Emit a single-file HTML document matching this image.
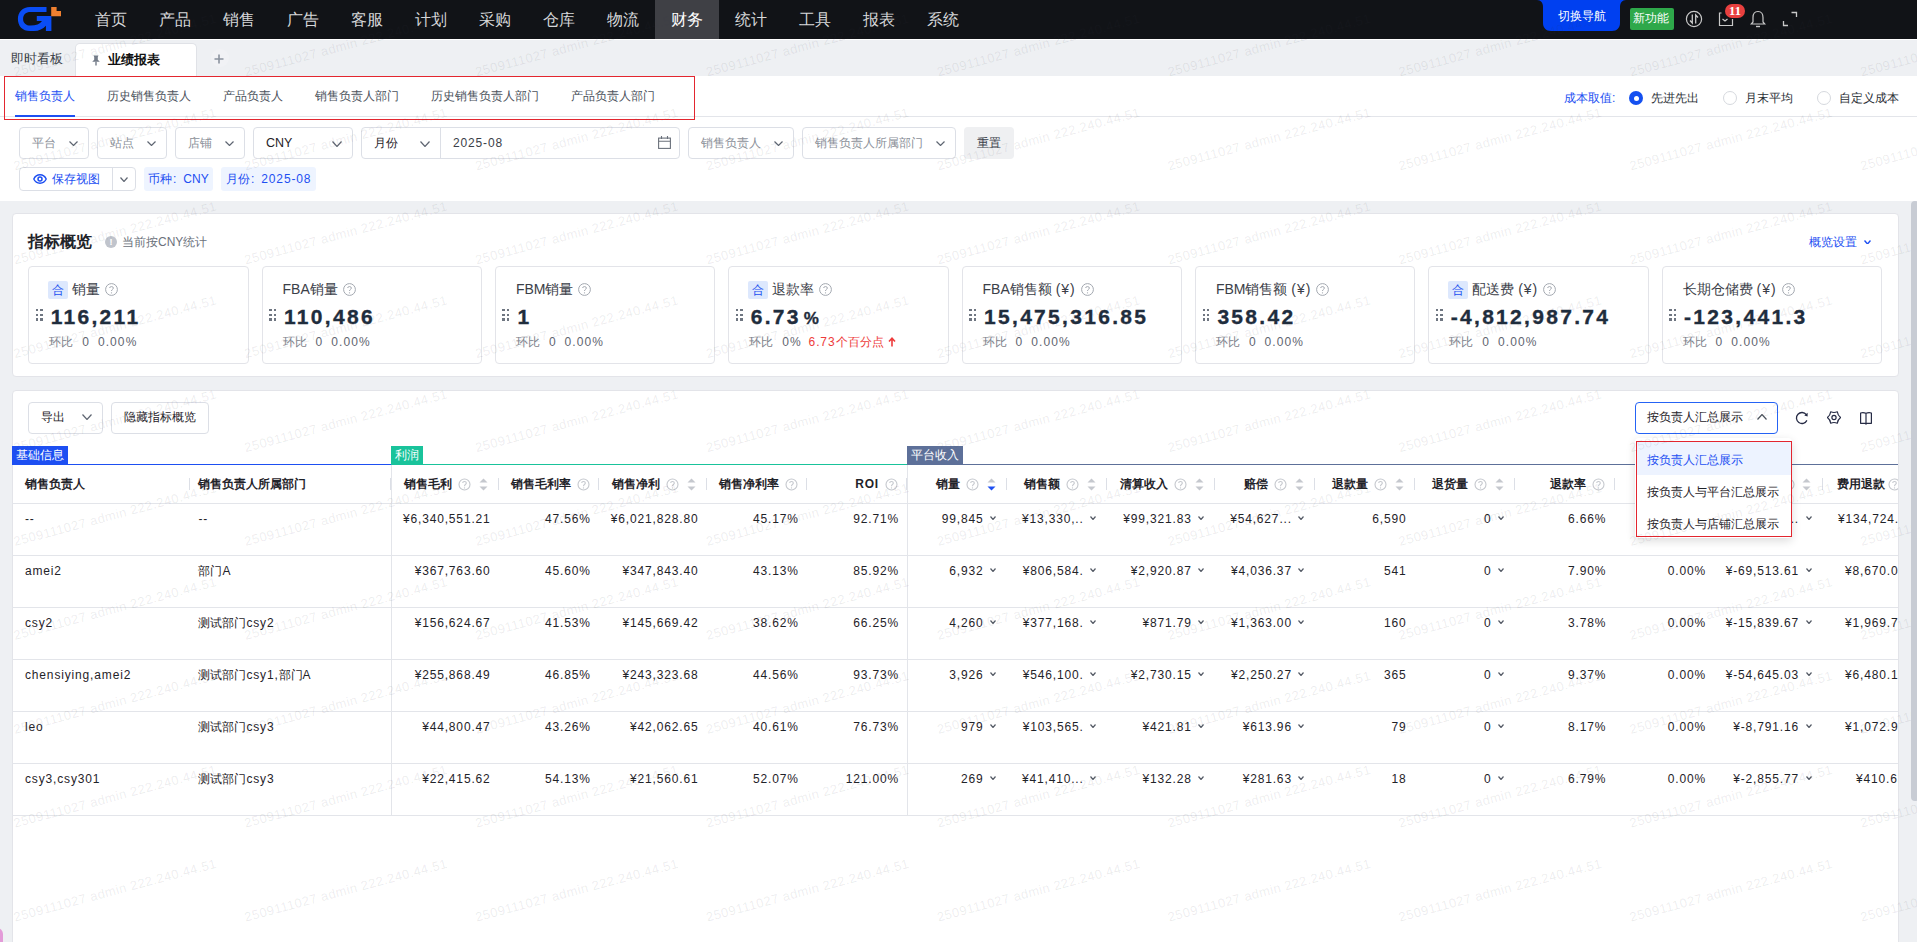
<!DOCTYPE html><html><head><meta charset="utf-8"><style>
*{box-sizing:border-box;margin:0;padding:0}
html,body{width:1917px;height:942px;overflow:hidden}
body{position:relative;background:#eef0f3;font-family:"Liberation Sans",sans-serif;color:#1f2329;font-size:12px;line-height:1}
.a{position:absolute;white-space:nowrap}
.nav{left:0;top:0;width:1917px;height:39px;background:#111317}
.nv{top:12px;height:16px;font-size:16px;color:#d6d7d9;width:64px;text-align:center}
.v{letter-spacing:.07em}
.box{border:1px solid #dcdfe6;border-radius:4px;background:#fff}
.chev{position:absolute}
.q{position:absolute;width:12px;height:12px;border:1px solid #c5c8ce;border-radius:50%;font-size:9px;line-height:10px;text-align:center;color:#c5c8ce}
.card{position:absolute;background:#fff;border:1px solid #e3e4e9;border-radius:4px}
.mc{position:absolute;top:266px;width:220.4px;height:97.5px;border:1px solid #e3e4e9;border-radius:4px;background:#fff}
.hd{font-weight:bold;font-size:12px;color:#1f2329}
.td{font-size:12px;color:#1f2329}
.sep{position:absolute;top:478px;width:1px;height:12px;background:#dcdfe6}
</style></head><body>
<div class="a nav"></div>
<svg class="a" style="left:0;top:0" width="70" height="39" viewBox="0 0 70 39">
<path d="M46.5 6.9 L30 6.9 C22.5 6.9 17.9 12 17.9 19 C17.9 26 22.5 31.1 30 31.1 L34 31.1 C39 31.1 43 29 45.9 25.8 L45.9 31.1 L51.4 31.1 L51.4 16.1 L36.8 16.1 L36.8 21 L42 21 C40 24 36 25.6 30.5 25.6 C26 25.6 23.1 23 23.1 19 C23.1 14.5 26 12.1 30.5 12.1 L46.5 12.1 Z" fill="#0a4df5" fill-rule="evenodd"/>
<path d="M51.2 7.1 L56.6 7.1 L56.6 10.9 L61 10.9 L61 16.3 L51.2 16.3 Z" fill="#f08030"/>
</svg>
<div class="a nv" style="left:79px">首页</div>
<div class="a nv" style="left:143px">产品</div>
<div class="a nv" style="left:207px">销售</div>
<div class="a nv" style="left:271px">广告</div>
<div class="a nv" style="left:335px">客服</div>
<div class="a nv" style="left:399px">计划</div>
<div class="a nv" style="left:463px">采购</div>
<div class="a nv" style="left:527px">仓库</div>
<div class="a nv" style="left:591px">物流</div>
<div class="a" style="left:655px;top:0;width:64px;height:39px;background:#3f4045"></div>
<div class="a nv" style="left:655px;color:#fff">财务</div>
<div class="a nv" style="left:719px">统计</div>
<div class="a nv" style="left:783px">工具</div>
<div class="a nv" style="left:847px">报表</div>
<div class="a nv" style="left:911px">系统</div>
<svg class="a" style="left:1537px;top:0" width="89" height="31" viewBox="0 0 89 31"><path d="M0 0 L89 0 C85 0 83 3 83 7 L83 23 C83 27.5 80 31 75 31 L14 31 C9 31 6 27.5 6 23 L6 7 C6 3 4 0 0 0 Z" fill="#0040f0"/></svg>
<div class="a" style="left:1558px;top:10px;font-size:12px;color:#fff">切换导航</div>
<div class="a" style="left:1630px;top:8px;width:44px;height:22px;background:#2ea84a;border-radius:2px"></div>
<div class="a" style="left:1633px;top:12px;font-size:12px;color:#fff">新功能</div>
<svg class="a" style="left:1685px;top:10px" width="18" height="18" viewBox="0 0 18 18"><circle cx="9" cy="9" r="7.6" fill="none" stroke="#c9c9c9" stroke-width="1.2"/><path d="M7.3 4.5 L7.3 13 L5 10.5 M10.7 13.5 L10.7 5 L13 7.5" fill="none" stroke="#c9c9c9" stroke-width="1.3"/></svg>
<svg class="a" style="left:1718px;top:11px" width="16" height="16" viewBox="0 0 16 16"><path d="M3.5 2 L1.5 2 L1.5 14.5 L14.5 14.5 L14.5 8" fill="none" stroke="#c9c9c9" stroke-width="1.2"/><path d="M4.5 8 L7 10 L9.5 8" fill="none" stroke="#c9c9c9" stroke-width="1.2"/></svg>
<div class="a" style="left:1725px;top:3.5px;width:20px;height:14.5px;border-radius:7.25px;background:#e8403f;color:#fff;font-size:12.5px;font-weight:bold;text-align:center;line-height:15px;font-family:'Liberation Serif',serif">11</div>
<svg class="a" style="left:1750px;top:10px" width="16" height="18" viewBox="0 0 16 18"><path d="M8 1.5 C4.5 1.5 3 4.5 3 7.5 L3 12 L1.2 14 L14.8 14 L13 12 L13 7.5 C13 4.5 11.5 1.5 8 1.5 Z" fill="none" stroke="#c9c9c9" stroke-width="1.2"/><path d="M6 16.5 L10 16.5" stroke="#c9c9c9" stroke-width="1.4"/></svg>
<svg class="a" style="left:1782px;top:11px" width="16" height="16" viewBox="0 0 16 16"><path d="M9.5 1.5 L14.5 1.5 L14.5 6 M1.5 10 L1.5 14.5 L6 14.5" fill="none" stroke="#c9c9c9" stroke-width="1.3"/></svg>
<div class="a" style="left:0;top:39px;width:1917px;height:37px;background:#eef0f3;border-top:1px solid #fff"></div>
<div class="a" style="left:11px;top:52px;font-size:13px;color:#3a3f47">即时看板</div>
<div class="a" style="left:75px;top:43px;width:122px;height:36px;background:#fff;border:1px solid #e0e2e7;border-bottom:none;border-radius:5px 5px 0 0"></div>
<svg class="a" style="left:91px;top:55px" width="10" height="11" viewBox="0 0 10 11"><path d="M2.5 0.5 L7.5 0.5 L6.8 2 L6.8 4.8 L8.8 6.8 L1.2 6.8 L3.2 4.8 L3.2 2 Z" fill="#737b88"/><path d="M5 6.8 L5 10.5" stroke="#737b88" stroke-width="1.4"/></svg>
<div class="a" style="left:108px;top:53px;font-size:13px;font-weight:bold;color:#111">业绩报表</div>
<div class="a" style="left:211px;top:49px;width:18px;height:18px;border-radius:50%;background:#f1f2f5"></div>
<svg class="a" style="left:214px;top:54px" width="10" height="10" viewBox="0 0 10 10"><path d="M5 0.5 L5 9.5 M0.5 5 L9.5 5" stroke="#8a929e" stroke-width="1.6"/></svg>
<div class="a" style="left:0;top:76px;width:1917px;height:125px;background:#fff"></div>
<div class="a" style="left:0;top:116px;width:1917px;height:1px;background:#e3e5ea"></div>
<div class="a" style="left:15px;top:89.5px;font-size:12px;color:#1d4ff2">销售负责人</div>
<div class="a" style="left:107px;top:89.5px;font-size:12px;color:#4b525c">历史销售负责人</div>
<div class="a" style="left:223px;top:89.5px;font-size:12px;color:#4b525c">产品负责人</div>
<div class="a" style="left:315px;top:89.5px;font-size:12px;color:#4b525c">销售负责人部门</div>
<div class="a" style="left:431px;top:89.5px;font-size:12px;color:#4b525c">历史销售负责人部门</div>
<div class="a" style="left:571px;top:89.5px;font-size:12px;color:#4b525c">产品负责人部门</div>
<div class="a" style="left:15px;top:114.5px;width:60px;height:2px;background:#1d4ff2"></div>
<div class="a" style="left:4px;top:76px;width:691px;height:44px;border:1.5px solid #e3262f"></div>
<div class="a" style="left:1564px;top:92px;font-size:12px;color:#1d4ff2">成本取值:</div>
<div class="a" style="left:1629px;top:91px;width:14px;height:14px;border-radius:50%;background:#1450f0"></div>
<div class="a" style="left:1633.5px;top:95.5px;width:5px;height:5px;border-radius:50%;background:#fff"></div>
<div class="a" style="left:1651px;top:92px;font-size:12px;color:#2b2f36">先进先出</div>
<div class="a" style="left:1723px;top:91px;width:14px;height:14px;border-radius:50%;border:1px solid #d6d9de"></div>
<div class="a" style="left:1745px;top:92px;font-size:12px;color:#2b2f36">月末平均</div>
<div class="a" style="left:1817px;top:91px;width:14px;height:14px;border-radius:50%;border:1px solid #d6d9de"></div>
<div class="a" style="left:1839px;top:92px;font-size:12px;color:#2b2f36">自定义成本</div>
<div class="a box" style="left:19px;top:127px;width:70px;height:32px"></div>
<div class="a" style="left:32px;top:137px;font-size:12px;color:#8b9099">平台</div>
<svg class="chev" style="left:69px;top:140.5px" width="9" height="5" viewBox="0 0 9 5"><path d="M0.5 0.5 L4.5 4.5 L8.5 0.5" fill="none" stroke="#5f6672" stroke-width="1.2"/></svg>
<div class="a box" style="left:97px;top:127px;width:70px;height:32px"></div>
<div class="a" style="left:110px;top:137px;font-size:12px;color:#8b9099">站点</div>
<svg class="chev" style="left:147px;top:140.5px" width="9" height="5" viewBox="0 0 9 5"><path d="M0.5 0.5 L4.5 4.5 L8.5 0.5" fill="none" stroke="#5f6672" stroke-width="1.2"/></svg>
<div class="a box" style="left:175px;top:127px;width:70px;height:32px"></div>
<div class="a" style="left:188px;top:137px;font-size:12px;color:#8b9099">店铺</div>
<svg class="chev" style="left:225px;top:140.5px" width="9" height="5" viewBox="0 0 9 5"><path d="M0.5 0.5 L4.5 4.5 L8.5 0.5" fill="none" stroke="#5f6672" stroke-width="1.2"/></svg>
<div class="a box" style="left:253px;top:127px;width:100px;height:32px"></div>
<div class="a" style="left:266px;top:137px;font-size:12.5px;color:#1f2329">CNY</div>
<svg class="chev" style="left:332px;top:140.5px" width="10" height="6" viewBox="0 0 10 6"><path d="M0.5 0.5 L5.0 5.5 L9.5 0.5" fill="none" stroke="#5f6672" stroke-width="1.2"/></svg>
<div class="a box" style="left:361px;top:127px;width:319px;height:32px"></div>
<div class="a" style="left:440px;top:127px;width:1px;height:32px;background:#dcdfe6"></div>
<div class="a" style="left:374px;top:137px;font-size:12px;color:#1f2329">月份</div>
<svg class="chev" style="left:420px;top:140.5px" width="10" height="6" viewBox="0 0 10 6"><path d="M0.5 0.5 L5.0 5.5 L9.5 0.5" fill="none" stroke="#5f6672" stroke-width="1.2"/></svg>
<div class="a v" style="left:453px;top:137px;font-size:12px;color:#3b4048">2025-08</div>
<svg class="a" style="left:658px;top:136px" width="13" height="13" viewBox="0 0 13 13"><rect x="0.6" y="2.1" width="11.8" height="10.3" fill="none" stroke="#6b717b" stroke-width="1.1"/><path d="M0.6 5.2 L12.4 5.2 M3.5 0 L3.5 3 M9.5 0 L9.5 3" stroke="#6b717b" stroke-width="1.1"/></svg>
<div class="a box" style="left:688px;top:127px;width:106px;height:32px"></div>
<div class="a" style="left:701px;top:137px;font-size:12px;color:#8b9099">销售负责人</div>
<svg class="chev" style="left:774px;top:140.5px" width="9" height="5" viewBox="0 0 9 5"><path d="M0.5 0.5 L4.5 4.5 L8.5 0.5" fill="none" stroke="#5f6672" stroke-width="1.2"/></svg>
<div class="a box" style="left:802px;top:127px;width:154px;height:32px"></div>
<div class="a" style="left:815px;top:137px;font-size:12px;color:#8b9099">销售负责人所属部门</div>
<svg class="chev" style="left:936px;top:140.5px" width="9" height="5" viewBox="0 0 9 5"><path d="M0.5 0.5 L4.5 4.5 L8.5 0.5" fill="none" stroke="#5f6672" stroke-width="1.2"/></svg>
<div class="a" style="left:964px;top:127px;width:50px;height:32px;background:#eff0f2;border-radius:4px"></div>
<div class="a" style="left:977px;top:137px;font-size:12px;color:#1f2329;color:#3a3f4a">重置</div>
<div class="a box" style="left:19px;top:167px;width:117px;height:24px"></div>
<div class="a" style="left:112px;top:167px;width:1px;height:24px;background:#dcdfe6"></div>
<svg class="a" style="left:33px;top:174px" width="14" height="10" viewBox="0 0 14 10"><path d="M0.8 5 C2.5 1.3 4.5 0.8 7 0.8 C9.5 0.8 11.5 1.3 13.2 5 C11.5 8.7 9.5 9.2 7 9.2 C4.5 9.2 2.5 8.7 0.8 5 Z" fill="none" stroke="#1d4ff2" stroke-width="1.4"/><circle cx="7" cy="5" r="2" fill="none" stroke="#1d4ff2" stroke-width="1.5"/></svg>
<div class="a" style="left:52px;top:173px;font-size:12px;color:#1d4ff2">保存视图</div>
<svg class="chev" style="left:119.5px;top:176.5px" width="8" height="5" viewBox="0 0 8 5"><path d="M0.5 0.5 L4.0 4.5 L7.5 0.5" fill="none" stroke="#5f6672" stroke-width="1.2"/></svg>
<div class="a" style="left:144px;top:167px;width:69px;height:24px;background:#eef4ff;border-radius:3px"></div>
<div class="a" style="left:148px;top:173px;font-size:12px;color:#1d4ff2">币种<span style="margin:0 7px 0 1px">:</span>CNY</div>
<div class="a" style="left:221px;top:167px;width:95px;height:24px;background:#eef4ff;border-radius:3px"></div>
<div class="a" style="left:226px;top:173px;font-size:12px;color:#1d4ff2">月份<span style="margin:0 7px 0 1px">:</span><span class="v">2025-08</span></div>
<div class="card" style="left:11.5px;top:213px;width:1887px;height:163.5px"></div>
<div class="a" style="left:28px;top:234px;font-size:16px;font-weight:bold;color:#1f2329">指标概览</div>
<div class="a" style="left:105px;top:236px;width:12px;height:12px;border-radius:50%;background:#c0c4cc;color:#fff;font-size:9px;font-weight:bold;text-align:center;line-height:12px">!</div>
<div class="a" style="left:122px;top:236px;font-size:12px;color:#6b717b">当前按CNY统计</div>
<div class="a" style="left:1809px;top:236px;font-size:12px;color:#1d4ff2">概览设置</div>
<svg class="chev" style="left:1864px;top:239.5px" width="7" height="4.5" viewBox="0 0 7 4.5"><path d="M0.5 0.5 L3.5 4.0 L6.5 0.5" fill="none" stroke="#1d4ff2" stroke-width="1.4"/></svg>
<div class="mc" style="left:28.20px"></div>
<div class="a" style="left:48.20px;top:281px;width:20px;height:18px;background:#dde8fd;border-radius:2px;color:#1a4ff0;font-size:12px;text-align:center;line-height:18px">合</div>
<div class="a" style="left:72.20px;top:282px;font-size:14px;color:#3b4048;line-height:14px">销量<svg style="display:inline-block;vertical-align:top;margin-left:5px;margin-top:0.5px" width="13" height="13" viewBox="0 0 13 13"><circle cx="6.5" cy="6.5" r="5.9" fill="none" stroke="#a3a8b0" stroke-width="1"/><path d="M4.6 5 C4.6 3.1 8.4 3.1 8.4 5 C8.4 6.4 6.5 6.3 6.5 8" fill="none" stroke="#a3a8b0" stroke-width="1"/><circle cx="6.5" cy="9.8" r="0.65" fill="#a3a8b0"/></svg></div>
<div class="a" style="left:35.80px;top:309px;width:7px;height:12px"><i style="position:absolute;left:0px;top:0px;width:2.4px;height:2.4px;background:#6f7681"></i><i style="position:absolute;left:0px;top:4.6px;width:2.4px;height:2.4px;background:#6f7681"></i><i style="position:absolute;left:0px;top:9.2px;width:2.4px;height:2.4px;background:#6f7681"></i><i style="position:absolute;left:4.4px;top:0px;width:2.4px;height:2.4px;background:#6f7681"></i><i style="position:absolute;left:4.4px;top:4.6px;width:2.4px;height:2.4px;background:#6f7681"></i><i style="position:absolute;left:4.4px;top:9.2px;width:2.4px;height:2.4px;background:#6f7681"></i></div>
<div class="a" style="left:50.70px;top:306px;font-size:21px;font-weight:bold;color:#1f2d3d;letter-spacing:2.3px;-webkit-text-stroke:0.35px #1f2d3d">116,211</div>
<div class="a" style="left:49.20px;top:336px;font-size:12px;color:#7d828b">环比<span style="margin-left:9px;color:#5f6570">0</span><span style="margin-left:9px;color:#5f6570;letter-spacing:1.1px">0.00%</span></div>
<div class="mc" style="left:261.54px"></div>
<div class="a" style="left:282.54px;top:282px;font-size:14px;color:#3b4048;line-height:14px">FBA销量<svg style="display:inline-block;vertical-align:top;margin-left:5px;margin-top:0.5px" width="13" height="13" viewBox="0 0 13 13"><circle cx="6.5" cy="6.5" r="5.9" fill="none" stroke="#a3a8b0" stroke-width="1"/><path d="M4.6 5 C4.6 3.1 8.4 3.1 8.4 5 C8.4 6.4 6.5 6.3 6.5 8" fill="none" stroke="#a3a8b0" stroke-width="1"/><circle cx="6.5" cy="9.8" r="0.65" fill="#a3a8b0"/></svg></div>
<div class="a" style="left:269.14px;top:309px;width:7px;height:12px"><i style="position:absolute;left:0px;top:0px;width:2.4px;height:2.4px;background:#6f7681"></i><i style="position:absolute;left:0px;top:4.6px;width:2.4px;height:2.4px;background:#6f7681"></i><i style="position:absolute;left:0px;top:9.2px;width:2.4px;height:2.4px;background:#6f7681"></i><i style="position:absolute;left:4.4px;top:0px;width:2.4px;height:2.4px;background:#6f7681"></i><i style="position:absolute;left:4.4px;top:4.6px;width:2.4px;height:2.4px;background:#6f7681"></i><i style="position:absolute;left:4.4px;top:9.2px;width:2.4px;height:2.4px;background:#6f7681"></i></div>
<div class="a" style="left:284.04px;top:306px;font-size:21px;font-weight:bold;color:#1f2d3d;letter-spacing:2.3px;-webkit-text-stroke:0.35px #1f2d3d">110,486</div>
<div class="a" style="left:282.54px;top:336px;font-size:12px;color:#7d828b">环比<span style="margin-left:9px;color:#5f6570">0</span><span style="margin-left:9px;color:#5f6570;letter-spacing:1.1px">0.00%</span></div>
<div class="mc" style="left:494.88px"></div>
<div class="a" style="left:515.88px;top:282px;font-size:14px;color:#3b4048;line-height:14px">FBM销量<svg style="display:inline-block;vertical-align:top;margin-left:5px;margin-top:0.5px" width="13" height="13" viewBox="0 0 13 13"><circle cx="6.5" cy="6.5" r="5.9" fill="none" stroke="#a3a8b0" stroke-width="1"/><path d="M4.6 5 C4.6 3.1 8.4 3.1 8.4 5 C8.4 6.4 6.5 6.3 6.5 8" fill="none" stroke="#a3a8b0" stroke-width="1"/><circle cx="6.5" cy="9.8" r="0.65" fill="#a3a8b0"/></svg></div>
<div class="a" style="left:502.48px;top:309px;width:7px;height:12px"><i style="position:absolute;left:0px;top:0px;width:2.4px;height:2.4px;background:#6f7681"></i><i style="position:absolute;left:0px;top:4.6px;width:2.4px;height:2.4px;background:#6f7681"></i><i style="position:absolute;left:0px;top:9.2px;width:2.4px;height:2.4px;background:#6f7681"></i><i style="position:absolute;left:4.4px;top:0px;width:2.4px;height:2.4px;background:#6f7681"></i><i style="position:absolute;left:4.4px;top:4.6px;width:2.4px;height:2.4px;background:#6f7681"></i><i style="position:absolute;left:4.4px;top:9.2px;width:2.4px;height:2.4px;background:#6f7681"></i></div>
<div class="a" style="left:517.38px;top:306px;font-size:21px;font-weight:bold;color:#1f2d3d;letter-spacing:2.3px;-webkit-text-stroke:0.35px #1f2d3d">1</div>
<div class="a" style="left:515.88px;top:336px;font-size:12px;color:#7d828b">环比<span style="margin-left:9px;color:#5f6570">0</span><span style="margin-left:9px;color:#5f6570;letter-spacing:1.1px">0.00%</span></div>
<div class="mc" style="left:728.22px"></div>
<div class="a" style="left:748.22px;top:281px;width:20px;height:18px;background:#dde8fd;border-radius:2px;color:#1a4ff0;font-size:12px;text-align:center;line-height:18px">合</div>
<div class="a" style="left:772.22px;top:282px;font-size:14px;color:#3b4048;line-height:14px">退款率<svg style="display:inline-block;vertical-align:top;margin-left:5px;margin-top:0.5px" width="13" height="13" viewBox="0 0 13 13"><circle cx="6.5" cy="6.5" r="5.9" fill="none" stroke="#a3a8b0" stroke-width="1"/><path d="M4.6 5 C4.6 3.1 8.4 3.1 8.4 5 C8.4 6.4 6.5 6.3 6.5 8" fill="none" stroke="#a3a8b0" stroke-width="1"/><circle cx="6.5" cy="9.8" r="0.65" fill="#a3a8b0"/></svg></div>
<div class="a" style="left:735.82px;top:309px;width:7px;height:12px"><i style="position:absolute;left:0px;top:0px;width:2.4px;height:2.4px;background:#6f7681"></i><i style="position:absolute;left:0px;top:4.6px;width:2.4px;height:2.4px;background:#6f7681"></i><i style="position:absolute;left:0px;top:9.2px;width:2.4px;height:2.4px;background:#6f7681"></i><i style="position:absolute;left:4.4px;top:0px;width:2.4px;height:2.4px;background:#6f7681"></i><i style="position:absolute;left:4.4px;top:4.6px;width:2.4px;height:2.4px;background:#6f7681"></i><i style="position:absolute;left:4.4px;top:9.2px;width:2.4px;height:2.4px;background:#6f7681"></i></div>
<div class="a" style="left:750.72px;top:306px;font-size:21px;font-weight:bold;color:#1f2d3d;letter-spacing:2.3px;-webkit-text-stroke:0.35px #1f2d3d">6.73<span style="font-size:17px;margin-left:3px;letter-spacing:0">%</span></div>
<div class="a" style="left:749.22px;top:336px;font-size:12px;color:#7d828b">环比<span style="margin-left:9px;color:#5f6570;letter-spacing:1px">0%</span><span style="color:#ee3b3b;margin-left:7px"><span style="letter-spacing:.9px">6.73</span>个百分点<svg style="display:inline-block;vertical-align:top;margin-left:4px;margin-top:1px" width="8" height="10" viewBox="0 0 8 10"><path d="M4 9.5 L4 1.5 M1 4.5 L4 1.2 L7 4.5" fill="none" stroke="#ee3b3b" stroke-width="1.6"/></svg></span></div>
<div class="mc" style="left:961.56px"></div>
<div class="a" style="left:982.56px;top:282px;font-size:14px;color:#3b4048;line-height:14px">FBA销售额 <span style="letter-spacing:1px">(¥)</span><svg style="display:inline-block;vertical-align:top;margin-left:5px;margin-top:0.5px" width="13" height="13" viewBox="0 0 13 13"><circle cx="6.5" cy="6.5" r="5.9" fill="none" stroke="#a3a8b0" stroke-width="1"/><path d="M4.6 5 C4.6 3.1 8.4 3.1 8.4 5 C8.4 6.4 6.5 6.3 6.5 8" fill="none" stroke="#a3a8b0" stroke-width="1"/><circle cx="6.5" cy="9.8" r="0.65" fill="#a3a8b0"/></svg></div>
<div class="a" style="left:969.16px;top:309px;width:7px;height:12px"><i style="position:absolute;left:0px;top:0px;width:2.4px;height:2.4px;background:#6f7681"></i><i style="position:absolute;left:0px;top:4.6px;width:2.4px;height:2.4px;background:#6f7681"></i><i style="position:absolute;left:0px;top:9.2px;width:2.4px;height:2.4px;background:#6f7681"></i><i style="position:absolute;left:4.4px;top:0px;width:2.4px;height:2.4px;background:#6f7681"></i><i style="position:absolute;left:4.4px;top:4.6px;width:2.4px;height:2.4px;background:#6f7681"></i><i style="position:absolute;left:4.4px;top:9.2px;width:2.4px;height:2.4px;background:#6f7681"></i></div>
<div class="a" style="left:984.06px;top:306px;font-size:21px;font-weight:bold;color:#1f2d3d;letter-spacing:2.3px;-webkit-text-stroke:0.35px #1f2d3d">15,475,316.85</div>
<div class="a" style="left:982.56px;top:336px;font-size:12px;color:#7d828b">环比<span style="margin-left:9px;color:#5f6570">0</span><span style="margin-left:9px;color:#5f6570;letter-spacing:1.1px">0.00%</span></div>
<div class="mc" style="left:1194.90px"></div>
<div class="a" style="left:1215.90px;top:282px;font-size:14px;color:#3b4048;line-height:14px">FBM销售额 <span style="letter-spacing:1px">(¥)</span><svg style="display:inline-block;vertical-align:top;margin-left:5px;margin-top:0.5px" width="13" height="13" viewBox="0 0 13 13"><circle cx="6.5" cy="6.5" r="5.9" fill="none" stroke="#a3a8b0" stroke-width="1"/><path d="M4.6 5 C4.6 3.1 8.4 3.1 8.4 5 C8.4 6.4 6.5 6.3 6.5 8" fill="none" stroke="#a3a8b0" stroke-width="1"/><circle cx="6.5" cy="9.8" r="0.65" fill="#a3a8b0"/></svg></div>
<div class="a" style="left:1202.50px;top:309px;width:7px;height:12px"><i style="position:absolute;left:0px;top:0px;width:2.4px;height:2.4px;background:#6f7681"></i><i style="position:absolute;left:0px;top:4.6px;width:2.4px;height:2.4px;background:#6f7681"></i><i style="position:absolute;left:0px;top:9.2px;width:2.4px;height:2.4px;background:#6f7681"></i><i style="position:absolute;left:4.4px;top:0px;width:2.4px;height:2.4px;background:#6f7681"></i><i style="position:absolute;left:4.4px;top:4.6px;width:2.4px;height:2.4px;background:#6f7681"></i><i style="position:absolute;left:4.4px;top:9.2px;width:2.4px;height:2.4px;background:#6f7681"></i></div>
<div class="a" style="left:1217.40px;top:306px;font-size:21px;font-weight:bold;color:#1f2d3d;letter-spacing:2.3px;-webkit-text-stroke:0.35px #1f2d3d">358.42</div>
<div class="a" style="left:1215.90px;top:336px;font-size:12px;color:#7d828b">环比<span style="margin-left:9px;color:#5f6570">0</span><span style="margin-left:9px;color:#5f6570;letter-spacing:1.1px">0.00%</span></div>
<div class="mc" style="left:1428.24px"></div>
<div class="a" style="left:1448.24px;top:281px;width:20px;height:18px;background:#dde8fd;border-radius:2px;color:#1a4ff0;font-size:12px;text-align:center;line-height:18px">合</div>
<div class="a" style="left:1472.24px;top:282px;font-size:14px;color:#3b4048;line-height:14px">配送费 <span style="letter-spacing:1px">(¥)</span><svg style="display:inline-block;vertical-align:top;margin-left:5px;margin-top:0.5px" width="13" height="13" viewBox="0 0 13 13"><circle cx="6.5" cy="6.5" r="5.9" fill="none" stroke="#a3a8b0" stroke-width="1"/><path d="M4.6 5 C4.6 3.1 8.4 3.1 8.4 5 C8.4 6.4 6.5 6.3 6.5 8" fill="none" stroke="#a3a8b0" stroke-width="1"/><circle cx="6.5" cy="9.8" r="0.65" fill="#a3a8b0"/></svg></div>
<div class="a" style="left:1435.84px;top:309px;width:7px;height:12px"><i style="position:absolute;left:0px;top:0px;width:2.4px;height:2.4px;background:#6f7681"></i><i style="position:absolute;left:0px;top:4.6px;width:2.4px;height:2.4px;background:#6f7681"></i><i style="position:absolute;left:0px;top:9.2px;width:2.4px;height:2.4px;background:#6f7681"></i><i style="position:absolute;left:4.4px;top:0px;width:2.4px;height:2.4px;background:#6f7681"></i><i style="position:absolute;left:4.4px;top:4.6px;width:2.4px;height:2.4px;background:#6f7681"></i><i style="position:absolute;left:4.4px;top:9.2px;width:2.4px;height:2.4px;background:#6f7681"></i></div>
<div class="a" style="left:1450.74px;top:306px;font-size:21px;font-weight:bold;color:#1f2d3d;letter-spacing:2.3px;-webkit-text-stroke:0.35px #1f2d3d">-4,812,987.74</div>
<div class="a" style="left:1449.24px;top:336px;font-size:12px;color:#7d828b">环比<span style="margin-left:9px;color:#5f6570">0</span><span style="margin-left:9px;color:#5f6570;letter-spacing:1.1px">0.00%</span></div>
<div class="mc" style="left:1661.58px"></div>
<div class="a" style="left:1682.58px;top:282px;font-size:14px;color:#3b4048;line-height:14px">长期仓储费 <span style="letter-spacing:1px">(¥)</span><svg style="display:inline-block;vertical-align:top;margin-left:5px;margin-top:0.5px" width="13" height="13" viewBox="0 0 13 13"><circle cx="6.5" cy="6.5" r="5.9" fill="none" stroke="#a3a8b0" stroke-width="1"/><path d="M4.6 5 C4.6 3.1 8.4 3.1 8.4 5 C8.4 6.4 6.5 6.3 6.5 8" fill="none" stroke="#a3a8b0" stroke-width="1"/><circle cx="6.5" cy="9.8" r="0.65" fill="#a3a8b0"/></svg></div>
<div class="a" style="left:1669.18px;top:309px;width:7px;height:12px"><i style="position:absolute;left:0px;top:0px;width:2.4px;height:2.4px;background:#6f7681"></i><i style="position:absolute;left:0px;top:4.6px;width:2.4px;height:2.4px;background:#6f7681"></i><i style="position:absolute;left:0px;top:9.2px;width:2.4px;height:2.4px;background:#6f7681"></i><i style="position:absolute;left:4.4px;top:0px;width:2.4px;height:2.4px;background:#6f7681"></i><i style="position:absolute;left:4.4px;top:4.6px;width:2.4px;height:2.4px;background:#6f7681"></i><i style="position:absolute;left:4.4px;top:9.2px;width:2.4px;height:2.4px;background:#6f7681"></i></div>
<div class="a" style="left:1684.08px;top:306px;font-size:21px;font-weight:bold;color:#1f2d3d;letter-spacing:2.3px;-webkit-text-stroke:0.35px #1f2d3d">-123,441.3</div>
<div class="a" style="left:1682.58px;top:336px;font-size:12px;color:#7d828b">环比<span style="margin-left:9px;color:#5f6570">0</span><span style="margin-left:9px;color:#5f6570;letter-spacing:1.1px">0.00%</span></div>
<div class="card" style="left:11.5px;top:390px;width:1887px;height:600px"></div>
<div class="a box" style="left:28px;top:402px;width:75px;height:32px"></div>
<div class="a" style="left:41px;top:411px;font-size:12px;color:#1f2329">导出</div>
<svg class="chev" style="left:82px;top:414px" width="10" height="6" viewBox="0 0 10 6"><path d="M0.5 0.5 L5.0 5.5 L9.5 0.5" fill="none" stroke="#5f6672" stroke-width="1.2"/></svg>
<div class="a box" style="left:111px;top:402px;width:98px;height:32px"></div>
<div class="a" style="left:124px;top:411px;font-size:12px;color:#1f2329">隐藏指标概览</div>
<div class="a" style="left:1634.5px;top:402px;width:143.5px;height:32px;border:1px solid #2563f5;border-radius:4px;background:#fff"></div>
<div class="a" style="left:1647px;top:411px;font-size:12px;color:#1f2329">按负责人汇总展示</div>
<svg class="chev" style="left:1757px;top:414px" width="10" height="6" viewBox="0 0 10 6"><path d="M0.5 5.5 L5.0 0.5 L9.5 5.5" fill="none" stroke="#4b525c" stroke-width="1.2"/></svg>
<svg class="a" style="left:1795px;top:411px" width="14" height="14" viewBox="0 0 14 14"><path d="M11.9 9.4 A5.5 5.5 0 1 1 11.3 3.6" fill="none" stroke="#262b45" stroke-width="1.3"/><path d="M12.6 1.8 L12.6 5.4 L9.3 4.6 Z" fill="#262b45"/></svg>
<svg class="a" style="left:1827px;top:410px" width="14" height="15" viewBox="0 0 14 15"><path d="M13.60 7.50 Q10.72 9.65 10.30 13.22 Q7.00 11.80 3.70 13.22 Q3.28 9.65 0.40 7.50 Q3.28 5.35 3.70 1.78 Q7.00 3.20 10.30 1.78 Q10.72 5.35 13.60 7.50 Z" fill="none" stroke="#262b45" stroke-width="1.2" stroke-linejoin="round"/><circle cx="7" cy="7.5" r="2.1" fill="none" stroke="#262b45" stroke-width="1.2"/></svg>
<svg class="a" style="left:1859px;top:411px" width="14" height="15" viewBox="0 0 14 15"><path d="M1.6 2 Q4.3 1.2 7 2.3 Q9.7 1.2 12.4 2 L12.4 12.3 L7.5 12.3 L7 13.2 L6.5 12.3 L1.6 12.3 Z M7 2.3 L7 12.3" fill="none" stroke="#262b45" stroke-width="1.2" stroke-linejoin="round"/></svg>
<div class="a" style="left:12px;top:446px;width:56px;height:18.5px;background:#1d4ff2;color:#fff;font-size:12px;padding:3px 0 0 4px">基础信息</div>
<div class="a" style="left:12px;top:464px;width:379px;height:1.3px;background:#1d4ff2"></div>
<div class="a" style="left:391px;top:446px;width:32px;height:18.5px;background:#19c39b;color:#fff;font-size:12px;padding:3px 0 0 4px">利润</div>
<div class="a" style="left:391px;top:464px;width:516px;height:1.3px;background:#19c39b"></div>
<div class="a" style="left:907px;top:446px;width:56px;height:18.5px;background:#5d7099;color:#fff;font-size:12px;padding:3px 0 0 4px">平台收入</div>
<div class="a" style="left:907px;top:464px;width:991px;height:1.3px;background:#5d7099"></div>
<div class="a" style="left:12px;top:503px;width:1886px;height:1px;background:#e3e5ea"></div>
<div class="a" style="left:12px;top:555px;width:1886px;height:1px;background:#e3e5ea"></div>
<div class="a" style="left:12px;top:607px;width:1886px;height:1px;background:#e3e5ea"></div>
<div class="a" style="left:12px;top:659px;width:1886px;height:1px;background:#e3e5ea"></div>
<div class="a" style="left:12px;top:711px;width:1886px;height:1px;background:#e3e5ea"></div>
<div class="a" style="left:12px;top:763px;width:1886px;height:1px;background:#e3e5ea"></div>
<div class="a" style="left:12px;top:815px;width:1886px;height:1px;background:#e3e5ea"></div>
<div class="a" style="left:391px;top:465px;width:1px;height:350px;background:#e3e5ea"></div>
<div class="a" style="left:907px;top:465px;width:1px;height:350px;background:#e3e5ea"></div>
<div class="a" style="left:0;top:0;width:1898px;height:942px;overflow:hidden">
<div class="a hd" style="left:25px;top:478px">销售负责人</div>
<div class="sep" style="left:188.9px"></div>
<div class="a hd" style="left:198.4px;top:478px">销售负责人所属部门</div>
<svg class="a" style="left:478.6px;top:478px" width="9" height="13" viewBox="0 0 9 13"><path d="M4.5 0.6 L8.5 4.6 L0.5 4.6 Z" fill="#c5c8ce"/><path d="M4.5 12.4 L8.5 8.4 L0.5 8.4 Z" fill="#c5c8ce"/></svg>
<svg class="a" style="left:458.1px;top:477.5px" width="13" height="13" viewBox="0 0 13 13"><circle cx="6.5" cy="6.5" r="5.5" fill="none" stroke="#c5c8ce" stroke-width="1.1"/><path d="M4.7 5 C4.7 3 8.3 3 8.3 5 C8.3 6.4 6.5 6.4 6.5 8.2" fill="none" stroke="#c5c8ce" stroke-width="1.1"/><circle cx="6.5" cy="9.9" r="0.65" fill="#c5c8ce"/></svg>
<div class="a hd" style="right:1446.4px;top:478px">销售毛利</div>
<div class="sep" style="left:498.1px"></div>
<svg class="a" style="left:576.7px;top:477.5px" width="13" height="13" viewBox="0 0 13 13"><circle cx="6.5" cy="6.5" r="5.5" fill="none" stroke="#c5c8ce" stroke-width="1.1"/><path d="M4.7 5 C4.7 3 8.3 3 8.3 5 C8.3 6.4 6.5 6.4 6.5 8.2" fill="none" stroke="#c5c8ce" stroke-width="1.1"/><circle cx="6.5" cy="9.9" r="0.65" fill="#c5c8ce"/></svg>
<div class="a hd" style="right:1327.3px;top:478px">销售毛利率</div>
<div class="sep" style="left:598.2px"></div>
<svg class="a" style="left:686.5px;top:478px" width="9" height="13" viewBox="0 0 9 13"><path d="M4.5 0.6 L8.5 4.6 L0.5 4.6 Z" fill="#c5c8ce"/><path d="M4.5 12.4 L8.5 8.4 L0.5 8.4 Z" fill="#c5c8ce"/></svg>
<svg class="a" style="left:666.0px;top:477.5px" width="13" height="13" viewBox="0 0 13 13"><circle cx="6.5" cy="6.5" r="5.5" fill="none" stroke="#c5c8ce" stroke-width="1.1"/><path d="M4.7 5 C4.7 3 8.3 3 8.3 5 C8.3 6.4 6.5 6.4 6.5 8.2" fill="none" stroke="#c5c8ce" stroke-width="1.1"/><circle cx="6.5" cy="9.9" r="0.65" fill="#c5c8ce"/></svg>
<div class="a hd" style="right:1238.5px;top:478px">销售净利</div>
<div class="sep" style="left:706.0px"></div>
<svg class="a" style="left:784.7px;top:477.5px" width="13" height="13" viewBox="0 0 13 13"><circle cx="6.5" cy="6.5" r="5.5" fill="none" stroke="#c5c8ce" stroke-width="1.1"/><path d="M4.7 5 C4.7 3 8.3 3 8.3 5 C8.3 6.4 6.5 6.4 6.5 8.2" fill="none" stroke="#c5c8ce" stroke-width="1.1"/><circle cx="6.5" cy="9.9" r="0.65" fill="#c5c8ce"/></svg>
<div class="a hd" style="right:1119.3px;top:478px">销售净利率</div>
<div class="sep" style="left:806.2px"></div>
<svg class="a" style="left:885px;top:477.5px" width="13" height="13" viewBox="0 0 13 13"><circle cx="6.5" cy="6.5" r="5.5" fill="none" stroke="#c5c8ce" stroke-width="1.1"/><path d="M4.7 5 C4.7 3 8.3 3 8.3 5 C8.3 6.4 6.5 6.4 6.5 8.2" fill="none" stroke="#c5c8ce" stroke-width="1.1"/><circle cx="6.5" cy="9.9" r="0.65" fill="#c5c8ce"/></svg>
<div class="a hd v" style="right:1019px;top:478px">ROI</div>
<svg class="a" style="left:986.5px;top:478px" width="9" height="13" viewBox="0 0 9 13"><path d="M4.5 0.6 L8.5 4.6 L0.5 4.6 Z" fill="#c5c8ce"/><path d="M4.5 12.4 L8.5 8.4 L0.5 8.4 Z" fill="#1d4ff2"/></svg>
<svg class="a" style="left:966.0px;top:477.5px" width="13" height="13" viewBox="0 0 13 13"><circle cx="6.5" cy="6.5" r="5.5" fill="none" stroke="#c5c8ce" stroke-width="1.1"/><path d="M4.7 5 C4.7 3 8.3 3 8.3 5 C8.3 6.4 6.5 6.4 6.5 8.2" fill="none" stroke="#c5c8ce" stroke-width="1.1"/><circle cx="6.5" cy="9.9" r="0.65" fill="#c5c8ce"/></svg>
<div class="a hd" style="right:938.5px;top:478px">销量</div>
<div class="sep" style="left:1006.0px"></div>
<svg class="a" style="left:1086.7px;top:478px" width="9" height="13" viewBox="0 0 9 13"><path d="M4.5 0.6 L8.5 4.6 L0.5 4.6 Z" fill="#c5c8ce"/><path d="M4.5 12.4 L8.5 8.4 L0.5 8.4 Z" fill="#c5c8ce"/></svg>
<svg class="a" style="left:1066.2px;top:477.5px" width="13" height="13" viewBox="0 0 13 13"><circle cx="6.5" cy="6.5" r="5.5" fill="none" stroke="#c5c8ce" stroke-width="1.1"/><path d="M4.7 5 C4.7 3 8.3 3 8.3 5 C8.3 6.4 6.5 6.4 6.5 8.2" fill="none" stroke="#c5c8ce" stroke-width="1.1"/><circle cx="6.5" cy="9.9" r="0.65" fill="#c5c8ce"/></svg>
<div class="a hd" style="right:838.3px;top:478px">销售额</div>
<div class="sep" style="left:1106.2px"></div>
<svg class="a" style="left:1194.7px;top:478px" width="9" height="13" viewBox="0 0 9 13"><path d="M4.5 0.6 L8.5 4.6 L0.5 4.6 Z" fill="#c5c8ce"/><path d="M4.5 12.4 L8.5 8.4 L0.5 8.4 Z" fill="#c5c8ce"/></svg>
<svg class="a" style="left:1174.2px;top:477.5px" width="13" height="13" viewBox="0 0 13 13"><circle cx="6.5" cy="6.5" r="5.5" fill="none" stroke="#c5c8ce" stroke-width="1.1"/><path d="M4.7 5 C4.7 3 8.3 3 8.3 5 C8.3 6.4 6.5 6.4 6.5 8.2" fill="none" stroke="#c5c8ce" stroke-width="1.1"/><circle cx="6.5" cy="9.9" r="0.65" fill="#c5c8ce"/></svg>
<div class="a hd" style="right:730.3px;top:478px">清算收入</div>
<div class="sep" style="left:1214.2px"></div>
<svg class="a" style="left:1294.9px;top:478px" width="9" height="13" viewBox="0 0 9 13"><path d="M4.5 0.6 L8.5 4.6 L0.5 4.6 Z" fill="#c5c8ce"/><path d="M4.5 12.4 L8.5 8.4 L0.5 8.4 Z" fill="#c5c8ce"/></svg>
<svg class="a" style="left:1274.4px;top:477.5px" width="13" height="13" viewBox="0 0 13 13"><circle cx="6.5" cy="6.5" r="5.5" fill="none" stroke="#c5c8ce" stroke-width="1.1"/><path d="M4.7 5 C4.7 3 8.3 3 8.3 5 C8.3 6.4 6.5 6.4 6.5 8.2" fill="none" stroke="#c5c8ce" stroke-width="1.1"/><circle cx="6.5" cy="9.9" r="0.65" fill="#c5c8ce"/></svg>
<div class="a hd" style="right:630.0999999999999px;top:478px">赔偿</div>
<div class="sep" style="left:1314.4px"></div>
<svg class="a" style="left:1394.5px;top:478px" width="9" height="13" viewBox="0 0 9 13"><path d="M4.5 0.6 L8.5 4.6 L0.5 4.6 Z" fill="#c5c8ce"/><path d="M4.5 12.4 L8.5 8.4 L0.5 8.4 Z" fill="#c5c8ce"/></svg>
<svg class="a" style="left:1374.0px;top:477.5px" width="13" height="13" viewBox="0 0 13 13"><circle cx="6.5" cy="6.5" r="5.5" fill="none" stroke="#c5c8ce" stroke-width="1.1"/><path d="M4.7 5 C4.7 3 8.3 3 8.3 5 C8.3 6.4 6.5 6.4 6.5 8.2" fill="none" stroke="#c5c8ce" stroke-width="1.1"/><circle cx="6.5" cy="9.9" r="0.65" fill="#c5c8ce"/></svg>
<div class="a hd" style="right:530.5px;top:478px">退款量</div>
<div class="sep" style="left:1414.0px"></div>
<svg class="a" style="left:1494.5px;top:478px" width="9" height="13" viewBox="0 0 9 13"><path d="M4.5 0.6 L8.5 4.6 L0.5 4.6 Z" fill="#c5c8ce"/><path d="M4.5 12.4 L8.5 8.4 L0.5 8.4 Z" fill="#c5c8ce"/></svg>
<svg class="a" style="left:1474.0px;top:477.5px" width="13" height="13" viewBox="0 0 13 13"><circle cx="6.5" cy="6.5" r="5.5" fill="none" stroke="#c5c8ce" stroke-width="1.1"/><path d="M4.7 5 C4.7 3 8.3 3 8.3 5 C8.3 6.4 6.5 6.4 6.5 8.2" fill="none" stroke="#c5c8ce" stroke-width="1.1"/><circle cx="6.5" cy="9.9" r="0.65" fill="#c5c8ce"/></svg>
<div class="a hd" style="right:430.5px;top:478px">退货量</div>
<div class="sep" style="left:1514.0px"></div>
<svg class="a" style="left:1592.2px;top:477.5px" width="13" height="13" viewBox="0 0 13 13"><circle cx="6.5" cy="6.5" r="5.5" fill="none" stroke="#c5c8ce" stroke-width="1.1"/><path d="M4.7 5 C4.7 3 8.3 3 8.3 5 C8.3 6.4 6.5 6.4 6.5 8.2" fill="none" stroke="#c5c8ce" stroke-width="1.1"/><circle cx="6.5" cy="9.9" r="0.65" fill="#c5c8ce"/></svg>
<div class="a hd" style="right:311.79999999999995px;top:478px">退款率</div>
<div class="sep" style="left:1613.7px"></div>
<svg class="a" style="left:1692px;top:477.5px" width="13" height="13" viewBox="0 0 13 13"><circle cx="6.5" cy="6.5" r="5.5" fill="none" stroke="#c5c8ce" stroke-width="1.1"/><path d="M4.7 5 C4.7 3 8.3 3 8.3 5 C8.3 6.4 6.5 6.4 6.5 8.2" fill="none" stroke="#c5c8ce" stroke-width="1.1"/><circle cx="6.5" cy="9.9" r="0.65" fill="#c5c8ce"/></svg>
<div class="a hd" style="right:212px;top:478px">退货率</div>
<div class="sep" style="left:1713.5px"></div>
<svg class="a" style="left:1802px;top:478px" width="9" height="13" viewBox="0 0 9 13"><path d="M4.5 0.6 L8.5 4.6 L0.5 4.6 Z" fill="#c5c8ce"/><path d="M4.5 12.4 L8.5 8.4 L0.5 8.4 Z" fill="#c5c8ce"/></svg>
<svg class="a" style="left:1781.5px;top:477.5px" width="13" height="13" viewBox="0 0 13 13"><circle cx="6.5" cy="6.5" r="5.5" fill="none" stroke="#c5c8ce" stroke-width="1.1"/><path d="M4.7 5 C4.7 3 8.3 3 8.3 5 C8.3 6.4 6.5 6.4 6.5 8.2" fill="none" stroke="#c5c8ce" stroke-width="1.1"/><circle cx="6.5" cy="9.9" r="0.65" fill="#c5c8ce"/></svg>
<div class="a hd" style="right:123.0px;top:478px">费用</div>
<div class="sep" style="left:1821.5px"></div>
<div class="a hd" style="left:1837px;top:478px">费用退款</div>
<svg class="a" style="left:1888px;top:477.5px" width="13" height="13" viewBox="0 0 13 13"><circle cx="6.5" cy="6.5" r="5.5" fill="none" stroke="#c5c8ce" stroke-width="1.1"/><path d="M4.7 5 C4.7 3 8.3 3 8.3 5 C8.3 6.4 6.5 6.4 6.5 8.2" fill="none" stroke="#c5c8ce" stroke-width="1.1"/><circle cx="6.5" cy="9.9" r="0.65" fill="#c5c8ce"/></svg>
</div>
<div class="sep" style="left:390px"></div>
<div class="sep" style="left:906px"></div>
<div class="a" style="left:12px;top:503px;width:1886px;height:320px;overflow:hidden">
<div class="a td" style="left:13px;top:10px"><span class="v">--</span></div>
<div class="a td" style="left:186.4px;top:10px"><span class="v">--</span></div>
<div class="a td v" style="right:1407.4px;top:10px">¥6,340,551.21</div>
<div class="a td v" style="right:1307.3px;top:10px">47.56%</div>
<div class="a td v" style="right:1199.5px;top:10px">¥6,021,828.80</div>
<div class="a td v" style="right:1099.3px;top:10px">45.17%</div>
<div class="a td v" style="right:999px;top:10px">92.71%</div>
<div class="a td v" style="right:914.5px;top:10px">99,845</div>
<svg class="chev" style="left:978.0px;top:13px" width="6" height="4" viewBox="0 0 6 4"><path d="M0.5 0.5 L3.0 3.5 L5.5 0.5" fill="none" stroke="#555b66" stroke-width="1.2"/></svg>
<div class="a td v" style="right:814.3px;top:10px">¥13,330,..</div>
<svg class="chev" style="left:1078.2px;top:13px" width="6" height="4" viewBox="0 0 6 4"><path d="M0.5 0.5 L3.0 3.5 L5.5 0.5" fill="none" stroke="#555b66" stroke-width="1.2"/></svg>
<div class="a td v" style="right:706.3px;top:10px">¥99,321.83</div>
<svg class="chev" style="left:1186.2px;top:13px" width="6" height="4" viewBox="0 0 6 4"><path d="M0.5 0.5 L3.0 3.5 L5.5 0.5" fill="none" stroke="#555b66" stroke-width="1.2"/></svg>
<div class="a td v" style="right:606.0999999999999px;top:10px">¥54,627...</div>
<svg class="chev" style="left:1286.4px;top:13px" width="6" height="4" viewBox="0 0 6 4"><path d="M0.5 0.5 L3.0 3.5 L5.5 0.5" fill="none" stroke="#555b66" stroke-width="1.2"/></svg>
<div class="a td v" style="right:491.5px;top:10px">6,590</div>
<div class="a td v" style="right:406.5px;top:10px">0</div>
<svg class="chev" style="left:1486.0px;top:13px" width="6" height="4" viewBox="0 0 6 4"><path d="M0.5 0.5 L3.0 3.5 L5.5 0.5" fill="none" stroke="#555b66" stroke-width="1.2"/></svg>
<div class="a td v" style="right:291.79999999999995px;top:10px">6.66%</div>
<div class="a td v" style="right:192px;top:10px">0.00%</div>
<div class="a td v" style="right:99px;top:10px">¥-1,306,2..</div>
<svg class="chev" style="left:1793.5px;top:13px" width="6" height="4" viewBox="0 0 6 4"><path d="M0.5 0.5 L3.0 3.5 L5.5 0.5" fill="none" stroke="#555b66" stroke-width="1.2"/></svg>
<div class="a td v" style="left:1826px;top:10px">¥134,724.00</div>
<div class="a td" style="left:13px;top:62px"><span class="v">amei2</span></div>
<div class="a td" style="left:186.4px;top:62px">部门<span class="v">A</span></div>
<div class="a td v" style="right:1407.4px;top:62px">¥367,763.60</div>
<div class="a td v" style="right:1307.3px;top:62px">45.60%</div>
<div class="a td v" style="right:1199.5px;top:62px">¥347,843.40</div>
<div class="a td v" style="right:1099.3px;top:62px">43.13%</div>
<div class="a td v" style="right:999px;top:62px">85.92%</div>
<div class="a td v" style="right:914.5px;top:62px">6,932</div>
<svg class="chev" style="left:978.0px;top:65px" width="6" height="4" viewBox="0 0 6 4"><path d="M0.5 0.5 L3.0 3.5 L5.5 0.5" fill="none" stroke="#555b66" stroke-width="1.2"/></svg>
<div class="a td v" style="right:814.3px;top:62px">¥806,584.</div>
<svg class="chev" style="left:1078.2px;top:65px" width="6" height="4" viewBox="0 0 6 4"><path d="M0.5 0.5 L3.0 3.5 L5.5 0.5" fill="none" stroke="#555b66" stroke-width="1.2"/></svg>
<div class="a td v" style="right:706.3px;top:62px">¥2,920.87</div>
<svg class="chev" style="left:1186.2px;top:65px" width="6" height="4" viewBox="0 0 6 4"><path d="M0.5 0.5 L3.0 3.5 L5.5 0.5" fill="none" stroke="#555b66" stroke-width="1.2"/></svg>
<div class="a td v" style="right:606.0999999999999px;top:62px">¥4,036.37</div>
<svg class="chev" style="left:1286.4px;top:65px" width="6" height="4" viewBox="0 0 6 4"><path d="M0.5 0.5 L3.0 3.5 L5.5 0.5" fill="none" stroke="#555b66" stroke-width="1.2"/></svg>
<div class="a td v" style="right:491.5px;top:62px">541</div>
<div class="a td v" style="right:406.5px;top:62px">0</div>
<svg class="chev" style="left:1486.0px;top:65px" width="6" height="4" viewBox="0 0 6 4"><path d="M0.5 0.5 L3.0 3.5 L5.5 0.5" fill="none" stroke="#555b66" stroke-width="1.2"/></svg>
<div class="a td v" style="right:291.79999999999995px;top:62px">7.90%</div>
<div class="a td v" style="right:192px;top:62px">0.00%</div>
<div class="a td v" style="right:99px;top:62px">¥-69,513.61</div>
<svg class="chev" style="left:1793.5px;top:65px" width="6" height="4" viewBox="0 0 6 4"><path d="M0.5 0.5 L3.0 3.5 L5.5 0.5" fill="none" stroke="#555b66" stroke-width="1.2"/></svg>
<div class="a td v" style="left:1833px;top:62px">¥8,670.00</div>
<div class="a td" style="left:13px;top:114px"><span class="v">csy2</span></div>
<div class="a td" style="left:186.4px;top:114px">测试部门<span class="v">csy2</span></div>
<div class="a td v" style="right:1407.4px;top:114px">¥156,624.67</div>
<div class="a td v" style="right:1307.3px;top:114px">41.53%</div>
<div class="a td v" style="right:1199.5px;top:114px">¥145,669.42</div>
<div class="a td v" style="right:1099.3px;top:114px">38.62%</div>
<div class="a td v" style="right:999px;top:114px">66.25%</div>
<div class="a td v" style="right:914.5px;top:114px">4,260</div>
<svg class="chev" style="left:978.0px;top:117px" width="6" height="4" viewBox="0 0 6 4"><path d="M0.5 0.5 L3.0 3.5 L5.5 0.5" fill="none" stroke="#555b66" stroke-width="1.2"/></svg>
<div class="a td v" style="right:814.3px;top:114px">¥377,168.</div>
<svg class="chev" style="left:1078.2px;top:117px" width="6" height="4" viewBox="0 0 6 4"><path d="M0.5 0.5 L3.0 3.5 L5.5 0.5" fill="none" stroke="#555b66" stroke-width="1.2"/></svg>
<div class="a td v" style="right:706.3px;top:114px">¥871.79</div>
<svg class="chev" style="left:1186.2px;top:117px" width="6" height="4" viewBox="0 0 6 4"><path d="M0.5 0.5 L3.0 3.5 L5.5 0.5" fill="none" stroke="#555b66" stroke-width="1.2"/></svg>
<div class="a td v" style="right:606.0999999999999px;top:114px">¥1,363.00</div>
<svg class="chev" style="left:1286.4px;top:117px" width="6" height="4" viewBox="0 0 6 4"><path d="M0.5 0.5 L3.0 3.5 L5.5 0.5" fill="none" stroke="#555b66" stroke-width="1.2"/></svg>
<div class="a td v" style="right:491.5px;top:114px">160</div>
<div class="a td v" style="right:406.5px;top:114px">0</div>
<svg class="chev" style="left:1486.0px;top:117px" width="6" height="4" viewBox="0 0 6 4"><path d="M0.5 0.5 L3.0 3.5 L5.5 0.5" fill="none" stroke="#555b66" stroke-width="1.2"/></svg>
<div class="a td v" style="right:291.79999999999995px;top:114px">3.78%</div>
<div class="a td v" style="right:192px;top:114px">0.00%</div>
<div class="a td v" style="right:99px;top:114px">¥-15,839.67</div>
<svg class="chev" style="left:1793.5px;top:117px" width="6" height="4" viewBox="0 0 6 4"><path d="M0.5 0.5 L3.0 3.5 L5.5 0.5" fill="none" stroke="#555b66" stroke-width="1.2"/></svg>
<div class="a td v" style="left:1833px;top:114px">¥1,969.70</div>
<div class="a td" style="left:13px;top:166px"><span class="v">chensiying,amei2</span></div>
<div class="a td" style="left:186.4px;top:166px">测试部门<span class="v">csy1,</span>部门<span class="v">A</span></div>
<div class="a td v" style="right:1407.4px;top:166px">¥255,868.49</div>
<div class="a td v" style="right:1307.3px;top:166px">46.85%</div>
<div class="a td v" style="right:1199.5px;top:166px">¥243,323.68</div>
<div class="a td v" style="right:1099.3px;top:166px">44.56%</div>
<div class="a td v" style="right:999px;top:166px">93.73%</div>
<div class="a td v" style="right:914.5px;top:166px">3,926</div>
<svg class="chev" style="left:978.0px;top:169px" width="6" height="4" viewBox="0 0 6 4"><path d="M0.5 0.5 L3.0 3.5 L5.5 0.5" fill="none" stroke="#555b66" stroke-width="1.2"/></svg>
<div class="a td v" style="right:814.3px;top:166px">¥546,100.</div>
<svg class="chev" style="left:1078.2px;top:169px" width="6" height="4" viewBox="0 0 6 4"><path d="M0.5 0.5 L3.0 3.5 L5.5 0.5" fill="none" stroke="#555b66" stroke-width="1.2"/></svg>
<div class="a td v" style="right:706.3px;top:166px">¥2,730.15</div>
<svg class="chev" style="left:1186.2px;top:169px" width="6" height="4" viewBox="0 0 6 4"><path d="M0.5 0.5 L3.0 3.5 L5.5 0.5" fill="none" stroke="#555b66" stroke-width="1.2"/></svg>
<div class="a td v" style="right:606.0999999999999px;top:166px">¥2,250.27</div>
<svg class="chev" style="left:1286.4px;top:169px" width="6" height="4" viewBox="0 0 6 4"><path d="M0.5 0.5 L3.0 3.5 L5.5 0.5" fill="none" stroke="#555b66" stroke-width="1.2"/></svg>
<div class="a td v" style="right:491.5px;top:166px">365</div>
<div class="a td v" style="right:406.5px;top:166px">0</div>
<svg class="chev" style="left:1486.0px;top:169px" width="6" height="4" viewBox="0 0 6 4"><path d="M0.5 0.5 L3.0 3.5 L5.5 0.5" fill="none" stroke="#555b66" stroke-width="1.2"/></svg>
<div class="a td v" style="right:291.79999999999995px;top:166px">9.37%</div>
<div class="a td v" style="right:192px;top:166px">0.00%</div>
<div class="a td v" style="right:99px;top:166px">¥-54,645.03</div>
<svg class="chev" style="left:1793.5px;top:169px" width="6" height="4" viewBox="0 0 6 4"><path d="M0.5 0.5 L3.0 3.5 L5.5 0.5" fill="none" stroke="#555b66" stroke-width="1.2"/></svg>
<div class="a td v" style="left:1833px;top:166px">¥6,480.10</div>
<div class="a td" style="left:13px;top:218px"><span class="v">leo</span></div>
<div class="a td" style="left:186.4px;top:218px">测试部门<span class="v">csy3</span></div>
<div class="a td v" style="right:1407.4px;top:218px">¥44,800.47</div>
<div class="a td v" style="right:1307.3px;top:218px">43.26%</div>
<div class="a td v" style="right:1199.5px;top:218px">¥42,062.65</div>
<div class="a td v" style="right:1099.3px;top:218px">40.61%</div>
<div class="a td v" style="right:999px;top:218px">76.73%</div>
<div class="a td v" style="right:914.5px;top:218px">979</div>
<svg class="chev" style="left:978.0px;top:221px" width="6" height="4" viewBox="0 0 6 4"><path d="M0.5 0.5 L3.0 3.5 L5.5 0.5" fill="none" stroke="#555b66" stroke-width="1.2"/></svg>
<div class="a td v" style="right:814.3px;top:218px">¥103,565.</div>
<svg class="chev" style="left:1078.2px;top:221px" width="6" height="4" viewBox="0 0 6 4"><path d="M0.5 0.5 L3.0 3.5 L5.5 0.5" fill="none" stroke="#555b66" stroke-width="1.2"/></svg>
<div class="a td v" style="right:706.3px;top:218px">¥421.81</div>
<svg class="chev" style="left:1186.2px;top:221px" width="6" height="4" viewBox="0 0 6 4"><path d="M0.5 0.5 L3.0 3.5 L5.5 0.5" fill="none" stroke="#555b66" stroke-width="1.2"/></svg>
<div class="a td v" style="right:606.0999999999999px;top:218px">¥613.96</div>
<svg class="chev" style="left:1286.4px;top:221px" width="6" height="4" viewBox="0 0 6 4"><path d="M0.5 0.5 L3.0 3.5 L5.5 0.5" fill="none" stroke="#555b66" stroke-width="1.2"/></svg>
<div class="a td v" style="right:491.5px;top:218px">79</div>
<div class="a td v" style="right:406.5px;top:218px">0</div>
<svg class="chev" style="left:1486.0px;top:221px" width="6" height="4" viewBox="0 0 6 4"><path d="M0.5 0.5 L3.0 3.5 L5.5 0.5" fill="none" stroke="#555b66" stroke-width="1.2"/></svg>
<div class="a td v" style="right:291.79999999999995px;top:218px">8.17%</div>
<div class="a td v" style="right:192px;top:218px">0.00%</div>
<div class="a td v" style="right:99px;top:218px">¥-8,791.16</div>
<svg class="chev" style="left:1793.5px;top:221px" width="6" height="4" viewBox="0 0 6 4"><path d="M0.5 0.5 L3.0 3.5 L5.5 0.5" fill="none" stroke="#555b66" stroke-width="1.2"/></svg>
<div class="a td v" style="left:1833px;top:218px">¥1,072.90</div>
<div class="a td" style="left:13px;top:270px"><span class="v">csy3,csy301</span></div>
<div class="a td" style="left:186.4px;top:270px">测试部门<span class="v">csy3</span></div>
<div class="a td v" style="right:1407.4px;top:270px">¥22,415.62</div>
<div class="a td v" style="right:1307.3px;top:270px">54.13%</div>
<div class="a td v" style="right:1199.5px;top:270px">¥21,560.61</div>
<div class="a td v" style="right:1099.3px;top:270px">52.07%</div>
<div class="a td v" style="right:999px;top:270px">121.00%</div>
<div class="a td v" style="right:914.5px;top:270px">269</div>
<svg class="chev" style="left:978.0px;top:273px" width="6" height="4" viewBox="0 0 6 4"><path d="M0.5 0.5 L3.0 3.5 L5.5 0.5" fill="none" stroke="#555b66" stroke-width="1.2"/></svg>
<div class="a td v" style="right:814.3px;top:270px">¥41,410...</div>
<svg class="chev" style="left:1078.2px;top:273px" width="6" height="4" viewBox="0 0 6 4"><path d="M0.5 0.5 L3.0 3.5 L5.5 0.5" fill="none" stroke="#555b66" stroke-width="1.2"/></svg>
<div class="a td v" style="right:706.3px;top:270px">¥132.28</div>
<svg class="chev" style="left:1186.2px;top:273px" width="6" height="4" viewBox="0 0 6 4"><path d="M0.5 0.5 L3.0 3.5 L5.5 0.5" fill="none" stroke="#555b66" stroke-width="1.2"/></svg>
<div class="a td v" style="right:606.0999999999999px;top:270px">¥281.63</div>
<svg class="chev" style="left:1286.4px;top:273px" width="6" height="4" viewBox="0 0 6 4"><path d="M0.5 0.5 L3.0 3.5 L5.5 0.5" fill="none" stroke="#555b66" stroke-width="1.2"/></svg>
<div class="a td v" style="right:491.5px;top:270px">18</div>
<div class="a td v" style="right:406.5px;top:270px">0</div>
<svg class="chev" style="left:1486.0px;top:273px" width="6" height="4" viewBox="0 0 6 4"><path d="M0.5 0.5 L3.0 3.5 L5.5 0.5" fill="none" stroke="#555b66" stroke-width="1.2"/></svg>
<div class="a td v" style="right:291.79999999999995px;top:270px">6.79%</div>
<div class="a td v" style="right:192px;top:270px">0.00%</div>
<div class="a td v" style="right:99px;top:270px">¥-2,855.77</div>
<svg class="chev" style="left:1793.5px;top:273px" width="6" height="4" viewBox="0 0 6 4"><path d="M0.5 0.5 L3.0 3.5 L5.5 0.5" fill="none" stroke="#555b66" stroke-width="1.2"/></svg>
<div class="a td v" style="left:1844px;top:270px">¥410.63</div>
</div>
<div class="a" style="left:1635px;top:438px;width:157px;height:100px;background:#fff;border-radius:4px;box-shadow:0 3px 10px rgba(0,0,0,.14)"></div>
<div class="a" style="left:1636px;top:441px;width:156px;height:34px;background:#edf3ff"></div>
<div class="a" style="left:1647px;top:454px;font-size:12px;color:#1d4ff2">按负责人汇总展示</div>
<div class="a" style="left:1647px;top:486px;font-size:12px;color:#1f2329">按负责人与平台汇总展示</div>
<div class="a" style="left:1647px;top:518px;font-size:12px;color:#1f2329">按负责人与店铺汇总展示</div>
<div class="a" style="left:1636px;top:441px;width:156px;height:96px;border:1.5px solid #e3262f"></div>
<svg class="a" style="left:0;top:0;pointer-events:none" width="1917" height="942" viewBox="0 0 1917 942"><text x="-215.8" y="-17.3" transform="rotate(-15 -215.8 -17.3)" font-family="Liberation Sans" font-size="13" letter-spacing="0.45" fill="rgba(60,60,72,0.095)">2509111027 admin 222.240.44.51</text><text x="15.0" y="-17.3" transform="rotate(-15 15.0 -17.3)" font-family="Liberation Sans" font-size="13" letter-spacing="0.45" fill="rgba(60,60,72,0.095)">2509111027 admin 222.240.44.51</text><text x="245.8" y="-17.3" transform="rotate(-15 245.8 -17.3)" font-family="Liberation Sans" font-size="13" letter-spacing="0.45" fill="rgba(60,60,72,0.095)">2509111027 admin 222.240.44.51</text><text x="476.7" y="-17.3" transform="rotate(-15 476.7 -17.3)" font-family="Liberation Sans" font-size="13" letter-spacing="0.45" fill="rgba(60,60,72,0.095)">2509111027 admin 222.240.44.51</text><text x="707.5" y="-17.3" transform="rotate(-15 707.5 -17.3)" font-family="Liberation Sans" font-size="13" letter-spacing="0.45" fill="rgba(60,60,72,0.095)">2509111027 admin 222.240.44.51</text><text x="938.4" y="-17.3" transform="rotate(-15 938.4 -17.3)" font-family="Liberation Sans" font-size="13" letter-spacing="0.45" fill="rgba(60,60,72,0.095)">2509111027 admin 222.240.44.51</text><text x="1169.2" y="-17.3" transform="rotate(-15 1169.2 -17.3)" font-family="Liberation Sans" font-size="13" letter-spacing="0.45" fill="rgba(60,60,72,0.095)">2509111027 admin 222.240.44.51</text><text x="1400.1" y="-17.3" transform="rotate(-15 1400.1 -17.3)" font-family="Liberation Sans" font-size="13" letter-spacing="0.45" fill="rgba(60,60,72,0.095)">2509111027 admin 222.240.44.51</text><text x="1631.0" y="-17.3" transform="rotate(-15 1631.0 -17.3)" font-family="Liberation Sans" font-size="13" letter-spacing="0.45" fill="rgba(60,60,72,0.095)">2509111027 admin 222.240.44.51</text><text x="1861.8" y="-17.3" transform="rotate(-15 1861.8 -17.3)" font-family="Liberation Sans" font-size="13" letter-spacing="0.45" fill="rgba(60,60,72,0.095)">2509111027 admin 222.240.44.51</text><text x="2092.7" y="-17.3" transform="rotate(-15 2092.7 -17.3)" font-family="Liberation Sans" font-size="13" letter-spacing="0.45" fill="rgba(60,60,72,0.095)">2509111027 admin 222.240.44.51</text><text x="-215.8" y="76.6" transform="rotate(-15 -215.8 76.6)" font-family="Liberation Sans" font-size="13" letter-spacing="0.45" fill="rgba(60,60,72,0.095)">2509111027 admin 222.240.44.51</text><text x="15.0" y="76.6" transform="rotate(-15 15.0 76.6)" font-family="Liberation Sans" font-size="13" letter-spacing="0.45" fill="rgba(60,60,72,0.095)">2509111027 admin 222.240.44.51</text><text x="245.8" y="76.6" transform="rotate(-15 245.8 76.6)" font-family="Liberation Sans" font-size="13" letter-spacing="0.45" fill="rgba(60,60,72,0.095)">2509111027 admin 222.240.44.51</text><text x="476.7" y="76.6" transform="rotate(-15 476.7 76.6)" font-family="Liberation Sans" font-size="13" letter-spacing="0.45" fill="rgba(60,60,72,0.095)">2509111027 admin 222.240.44.51</text><text x="707.5" y="76.6" transform="rotate(-15 707.5 76.6)" font-family="Liberation Sans" font-size="13" letter-spacing="0.45" fill="rgba(60,60,72,0.095)">2509111027 admin 222.240.44.51</text><text x="938.4" y="76.6" transform="rotate(-15 938.4 76.6)" font-family="Liberation Sans" font-size="13" letter-spacing="0.45" fill="rgba(60,60,72,0.095)">2509111027 admin 222.240.44.51</text><text x="1169.2" y="76.6" transform="rotate(-15 1169.2 76.6)" font-family="Liberation Sans" font-size="13" letter-spacing="0.45" fill="rgba(60,60,72,0.095)">2509111027 admin 222.240.44.51</text><text x="1400.1" y="76.6" transform="rotate(-15 1400.1 76.6)" font-family="Liberation Sans" font-size="13" letter-spacing="0.45" fill="rgba(60,60,72,0.095)">2509111027 admin 222.240.44.51</text><text x="1631.0" y="76.6" transform="rotate(-15 1631.0 76.6)" font-family="Liberation Sans" font-size="13" letter-spacing="0.45" fill="rgba(60,60,72,0.095)">2509111027 admin 222.240.44.51</text><text x="1861.8" y="76.6" transform="rotate(-15 1861.8 76.6)" font-family="Liberation Sans" font-size="13" letter-spacing="0.45" fill="rgba(60,60,72,0.095)">2509111027 admin 222.240.44.51</text><text x="2092.7" y="76.6" transform="rotate(-15 2092.7 76.6)" font-family="Liberation Sans" font-size="13" letter-spacing="0.45" fill="rgba(60,60,72,0.095)">2509111027 admin 222.240.44.51</text><text x="-215.8" y="170.5" transform="rotate(-15 -215.8 170.5)" font-family="Liberation Sans" font-size="13" letter-spacing="0.45" fill="rgba(60,60,72,0.095)">2509111027 admin 222.240.44.51</text><text x="15.0" y="170.5" transform="rotate(-15 15.0 170.5)" font-family="Liberation Sans" font-size="13" letter-spacing="0.45" fill="rgba(60,60,72,0.095)">2509111027 admin 222.240.44.51</text><text x="245.8" y="170.5" transform="rotate(-15 245.8 170.5)" font-family="Liberation Sans" font-size="13" letter-spacing="0.45" fill="rgba(60,60,72,0.095)">2509111027 admin 222.240.44.51</text><text x="476.7" y="170.5" transform="rotate(-15 476.7 170.5)" font-family="Liberation Sans" font-size="13" letter-spacing="0.45" fill="rgba(60,60,72,0.095)">2509111027 admin 222.240.44.51</text><text x="707.5" y="170.5" transform="rotate(-15 707.5 170.5)" font-family="Liberation Sans" font-size="13" letter-spacing="0.45" fill="rgba(60,60,72,0.095)">2509111027 admin 222.240.44.51</text><text x="938.4" y="170.5" transform="rotate(-15 938.4 170.5)" font-family="Liberation Sans" font-size="13" letter-spacing="0.45" fill="rgba(60,60,72,0.095)">2509111027 admin 222.240.44.51</text><text x="1169.2" y="170.5" transform="rotate(-15 1169.2 170.5)" font-family="Liberation Sans" font-size="13" letter-spacing="0.45" fill="rgba(60,60,72,0.095)">2509111027 admin 222.240.44.51</text><text x="1400.1" y="170.5" transform="rotate(-15 1400.1 170.5)" font-family="Liberation Sans" font-size="13" letter-spacing="0.45" fill="rgba(60,60,72,0.095)">2509111027 admin 222.240.44.51</text><text x="1631.0" y="170.5" transform="rotate(-15 1631.0 170.5)" font-family="Liberation Sans" font-size="13" letter-spacing="0.45" fill="rgba(60,60,72,0.095)">2509111027 admin 222.240.44.51</text><text x="1861.8" y="170.5" transform="rotate(-15 1861.8 170.5)" font-family="Liberation Sans" font-size="13" letter-spacing="0.45" fill="rgba(60,60,72,0.095)">2509111027 admin 222.240.44.51</text><text x="2092.7" y="170.5" transform="rotate(-15 2092.7 170.5)" font-family="Liberation Sans" font-size="13" letter-spacing="0.45" fill="rgba(60,60,72,0.095)">2509111027 admin 222.240.44.51</text><text x="-215.8" y="264.4" transform="rotate(-15 -215.8 264.4)" font-family="Liberation Sans" font-size="13" letter-spacing="0.45" fill="rgba(60,60,72,0.095)">2509111027 admin 222.240.44.51</text><text x="15.0" y="264.4" transform="rotate(-15 15.0 264.4)" font-family="Liberation Sans" font-size="13" letter-spacing="0.45" fill="rgba(60,60,72,0.095)">2509111027 admin 222.240.44.51</text><text x="245.8" y="264.4" transform="rotate(-15 245.8 264.4)" font-family="Liberation Sans" font-size="13" letter-spacing="0.45" fill="rgba(60,60,72,0.095)">2509111027 admin 222.240.44.51</text><text x="476.7" y="264.4" transform="rotate(-15 476.7 264.4)" font-family="Liberation Sans" font-size="13" letter-spacing="0.45" fill="rgba(60,60,72,0.095)">2509111027 admin 222.240.44.51</text><text x="707.5" y="264.4" transform="rotate(-15 707.5 264.4)" font-family="Liberation Sans" font-size="13" letter-spacing="0.45" fill="rgba(60,60,72,0.095)">2509111027 admin 222.240.44.51</text><text x="938.4" y="264.4" transform="rotate(-15 938.4 264.4)" font-family="Liberation Sans" font-size="13" letter-spacing="0.45" fill="rgba(60,60,72,0.095)">2509111027 admin 222.240.44.51</text><text x="1169.2" y="264.4" transform="rotate(-15 1169.2 264.4)" font-family="Liberation Sans" font-size="13" letter-spacing="0.45" fill="rgba(60,60,72,0.095)">2509111027 admin 222.240.44.51</text><text x="1400.1" y="264.4" transform="rotate(-15 1400.1 264.4)" font-family="Liberation Sans" font-size="13" letter-spacing="0.45" fill="rgba(60,60,72,0.095)">2509111027 admin 222.240.44.51</text><text x="1631.0" y="264.4" transform="rotate(-15 1631.0 264.4)" font-family="Liberation Sans" font-size="13" letter-spacing="0.45" fill="rgba(60,60,72,0.095)">2509111027 admin 222.240.44.51</text><text x="1861.8" y="264.4" transform="rotate(-15 1861.8 264.4)" font-family="Liberation Sans" font-size="13" letter-spacing="0.45" fill="rgba(60,60,72,0.095)">2509111027 admin 222.240.44.51</text><text x="2092.7" y="264.4" transform="rotate(-15 2092.7 264.4)" font-family="Liberation Sans" font-size="13" letter-spacing="0.45" fill="rgba(60,60,72,0.095)">2509111027 admin 222.240.44.51</text><text x="-215.8" y="358.3" transform="rotate(-15 -215.8 358.3)" font-family="Liberation Sans" font-size="13" letter-spacing="0.45" fill="rgba(60,60,72,0.095)">2509111027 admin 222.240.44.51</text><text x="15.0" y="358.3" transform="rotate(-15 15.0 358.3)" font-family="Liberation Sans" font-size="13" letter-spacing="0.45" fill="rgba(60,60,72,0.095)">2509111027 admin 222.240.44.51</text><text x="245.8" y="358.3" transform="rotate(-15 245.8 358.3)" font-family="Liberation Sans" font-size="13" letter-spacing="0.45" fill="rgba(60,60,72,0.095)">2509111027 admin 222.240.44.51</text><text x="476.7" y="358.3" transform="rotate(-15 476.7 358.3)" font-family="Liberation Sans" font-size="13" letter-spacing="0.45" fill="rgba(60,60,72,0.095)">2509111027 admin 222.240.44.51</text><text x="707.5" y="358.3" transform="rotate(-15 707.5 358.3)" font-family="Liberation Sans" font-size="13" letter-spacing="0.45" fill="rgba(60,60,72,0.095)">2509111027 admin 222.240.44.51</text><text x="938.4" y="358.3" transform="rotate(-15 938.4 358.3)" font-family="Liberation Sans" font-size="13" letter-spacing="0.45" fill="rgba(60,60,72,0.095)">2509111027 admin 222.240.44.51</text><text x="1169.2" y="358.3" transform="rotate(-15 1169.2 358.3)" font-family="Liberation Sans" font-size="13" letter-spacing="0.45" fill="rgba(60,60,72,0.095)">2509111027 admin 222.240.44.51</text><text x="1400.1" y="358.3" transform="rotate(-15 1400.1 358.3)" font-family="Liberation Sans" font-size="13" letter-spacing="0.45" fill="rgba(60,60,72,0.095)">2509111027 admin 222.240.44.51</text><text x="1631.0" y="358.3" transform="rotate(-15 1631.0 358.3)" font-family="Liberation Sans" font-size="13" letter-spacing="0.45" fill="rgba(60,60,72,0.095)">2509111027 admin 222.240.44.51</text><text x="1861.8" y="358.3" transform="rotate(-15 1861.8 358.3)" font-family="Liberation Sans" font-size="13" letter-spacing="0.45" fill="rgba(60,60,72,0.095)">2509111027 admin 222.240.44.51</text><text x="2092.7" y="358.3" transform="rotate(-15 2092.7 358.3)" font-family="Liberation Sans" font-size="13" letter-spacing="0.45" fill="rgba(60,60,72,0.095)">2509111027 admin 222.240.44.51</text><text x="-215.8" y="452.2" transform="rotate(-15 -215.8 452.2)" font-family="Liberation Sans" font-size="13" letter-spacing="0.45" fill="rgba(60,60,72,0.095)">2509111027 admin 222.240.44.51</text><text x="15.0" y="452.2" transform="rotate(-15 15.0 452.2)" font-family="Liberation Sans" font-size="13" letter-spacing="0.45" fill="rgba(60,60,72,0.095)">2509111027 admin 222.240.44.51</text><text x="245.8" y="452.2" transform="rotate(-15 245.8 452.2)" font-family="Liberation Sans" font-size="13" letter-spacing="0.45" fill="rgba(60,60,72,0.095)">2509111027 admin 222.240.44.51</text><text x="476.7" y="452.2" transform="rotate(-15 476.7 452.2)" font-family="Liberation Sans" font-size="13" letter-spacing="0.45" fill="rgba(60,60,72,0.095)">2509111027 admin 222.240.44.51</text><text x="707.5" y="452.2" transform="rotate(-15 707.5 452.2)" font-family="Liberation Sans" font-size="13" letter-spacing="0.45" fill="rgba(60,60,72,0.095)">2509111027 admin 222.240.44.51</text><text x="938.4" y="452.2" transform="rotate(-15 938.4 452.2)" font-family="Liberation Sans" font-size="13" letter-spacing="0.45" fill="rgba(60,60,72,0.095)">2509111027 admin 222.240.44.51</text><text x="1169.2" y="452.2" transform="rotate(-15 1169.2 452.2)" font-family="Liberation Sans" font-size="13" letter-spacing="0.45" fill="rgba(60,60,72,0.095)">2509111027 admin 222.240.44.51</text><text x="1400.1" y="452.2" transform="rotate(-15 1400.1 452.2)" font-family="Liberation Sans" font-size="13" letter-spacing="0.45" fill="rgba(60,60,72,0.095)">2509111027 admin 222.240.44.51</text><text x="1631.0" y="452.2" transform="rotate(-15 1631.0 452.2)" font-family="Liberation Sans" font-size="13" letter-spacing="0.45" fill="rgba(60,60,72,0.095)">2509111027 admin 222.240.44.51</text><text x="1861.8" y="452.2" transform="rotate(-15 1861.8 452.2)" font-family="Liberation Sans" font-size="13" letter-spacing="0.45" fill="rgba(60,60,72,0.095)">2509111027 admin 222.240.44.51</text><text x="2092.7" y="452.2" transform="rotate(-15 2092.7 452.2)" font-family="Liberation Sans" font-size="13" letter-spacing="0.45" fill="rgba(60,60,72,0.095)">2509111027 admin 222.240.44.51</text><text x="-215.8" y="546.1" transform="rotate(-15 -215.8 546.1)" font-family="Liberation Sans" font-size="13" letter-spacing="0.45" fill="rgba(60,60,72,0.095)">2509111027 admin 222.240.44.51</text><text x="15.0" y="546.1" transform="rotate(-15 15.0 546.1)" font-family="Liberation Sans" font-size="13" letter-spacing="0.45" fill="rgba(60,60,72,0.095)">2509111027 admin 222.240.44.51</text><text x="245.8" y="546.1" transform="rotate(-15 245.8 546.1)" font-family="Liberation Sans" font-size="13" letter-spacing="0.45" fill="rgba(60,60,72,0.095)">2509111027 admin 222.240.44.51</text><text x="476.7" y="546.1" transform="rotate(-15 476.7 546.1)" font-family="Liberation Sans" font-size="13" letter-spacing="0.45" fill="rgba(60,60,72,0.095)">2509111027 admin 222.240.44.51</text><text x="707.5" y="546.1" transform="rotate(-15 707.5 546.1)" font-family="Liberation Sans" font-size="13" letter-spacing="0.45" fill="rgba(60,60,72,0.095)">2509111027 admin 222.240.44.51</text><text x="938.4" y="546.1" transform="rotate(-15 938.4 546.1)" font-family="Liberation Sans" font-size="13" letter-spacing="0.45" fill="rgba(60,60,72,0.095)">2509111027 admin 222.240.44.51</text><text x="1169.2" y="546.1" transform="rotate(-15 1169.2 546.1)" font-family="Liberation Sans" font-size="13" letter-spacing="0.45" fill="rgba(60,60,72,0.095)">2509111027 admin 222.240.44.51</text><text x="1400.1" y="546.1" transform="rotate(-15 1400.1 546.1)" font-family="Liberation Sans" font-size="13" letter-spacing="0.45" fill="rgba(60,60,72,0.095)">2509111027 admin 222.240.44.51</text><text x="1631.0" y="546.1" transform="rotate(-15 1631.0 546.1)" font-family="Liberation Sans" font-size="13" letter-spacing="0.45" fill="rgba(60,60,72,0.095)">2509111027 admin 222.240.44.51</text><text x="1861.8" y="546.1" transform="rotate(-15 1861.8 546.1)" font-family="Liberation Sans" font-size="13" letter-spacing="0.45" fill="rgba(60,60,72,0.095)">2509111027 admin 222.240.44.51</text><text x="2092.7" y="546.1" transform="rotate(-15 2092.7 546.1)" font-family="Liberation Sans" font-size="13" letter-spacing="0.45" fill="rgba(60,60,72,0.095)">2509111027 admin 222.240.44.51</text><text x="-215.8" y="640.0" transform="rotate(-15 -215.8 640.0)" font-family="Liberation Sans" font-size="13" letter-spacing="0.45" fill="rgba(60,60,72,0.095)">2509111027 admin 222.240.44.51</text><text x="15.0" y="640.0" transform="rotate(-15 15.0 640.0)" font-family="Liberation Sans" font-size="13" letter-spacing="0.45" fill="rgba(60,60,72,0.095)">2509111027 admin 222.240.44.51</text><text x="245.8" y="640.0" transform="rotate(-15 245.8 640.0)" font-family="Liberation Sans" font-size="13" letter-spacing="0.45" fill="rgba(60,60,72,0.095)">2509111027 admin 222.240.44.51</text><text x="476.7" y="640.0" transform="rotate(-15 476.7 640.0)" font-family="Liberation Sans" font-size="13" letter-spacing="0.45" fill="rgba(60,60,72,0.095)">2509111027 admin 222.240.44.51</text><text x="707.5" y="640.0" transform="rotate(-15 707.5 640.0)" font-family="Liberation Sans" font-size="13" letter-spacing="0.45" fill="rgba(60,60,72,0.095)">2509111027 admin 222.240.44.51</text><text x="938.4" y="640.0" transform="rotate(-15 938.4 640.0)" font-family="Liberation Sans" font-size="13" letter-spacing="0.45" fill="rgba(60,60,72,0.095)">2509111027 admin 222.240.44.51</text><text x="1169.2" y="640.0" transform="rotate(-15 1169.2 640.0)" font-family="Liberation Sans" font-size="13" letter-spacing="0.45" fill="rgba(60,60,72,0.095)">2509111027 admin 222.240.44.51</text><text x="1400.1" y="640.0" transform="rotate(-15 1400.1 640.0)" font-family="Liberation Sans" font-size="13" letter-spacing="0.45" fill="rgba(60,60,72,0.095)">2509111027 admin 222.240.44.51</text><text x="1631.0" y="640.0" transform="rotate(-15 1631.0 640.0)" font-family="Liberation Sans" font-size="13" letter-spacing="0.45" fill="rgba(60,60,72,0.095)">2509111027 admin 222.240.44.51</text><text x="1861.8" y="640.0" transform="rotate(-15 1861.8 640.0)" font-family="Liberation Sans" font-size="13" letter-spacing="0.45" fill="rgba(60,60,72,0.095)">2509111027 admin 222.240.44.51</text><text x="2092.7" y="640.0" transform="rotate(-15 2092.7 640.0)" font-family="Liberation Sans" font-size="13" letter-spacing="0.45" fill="rgba(60,60,72,0.095)">2509111027 admin 222.240.44.51</text><text x="-215.8" y="733.9" transform="rotate(-15 -215.8 733.9)" font-family="Liberation Sans" font-size="13" letter-spacing="0.45" fill="rgba(60,60,72,0.095)">2509111027 admin 222.240.44.51</text><text x="15.0" y="733.9" transform="rotate(-15 15.0 733.9)" font-family="Liberation Sans" font-size="13" letter-spacing="0.45" fill="rgba(60,60,72,0.095)">2509111027 admin 222.240.44.51</text><text x="245.8" y="733.9" transform="rotate(-15 245.8 733.9)" font-family="Liberation Sans" font-size="13" letter-spacing="0.45" fill="rgba(60,60,72,0.095)">2509111027 admin 222.240.44.51</text><text x="476.7" y="733.9" transform="rotate(-15 476.7 733.9)" font-family="Liberation Sans" font-size="13" letter-spacing="0.45" fill="rgba(60,60,72,0.095)">2509111027 admin 222.240.44.51</text><text x="707.5" y="733.9" transform="rotate(-15 707.5 733.9)" font-family="Liberation Sans" font-size="13" letter-spacing="0.45" fill="rgba(60,60,72,0.095)">2509111027 admin 222.240.44.51</text><text x="938.4" y="733.9" transform="rotate(-15 938.4 733.9)" font-family="Liberation Sans" font-size="13" letter-spacing="0.45" fill="rgba(60,60,72,0.095)">2509111027 admin 222.240.44.51</text><text x="1169.2" y="733.9" transform="rotate(-15 1169.2 733.9)" font-family="Liberation Sans" font-size="13" letter-spacing="0.45" fill="rgba(60,60,72,0.095)">2509111027 admin 222.240.44.51</text><text x="1400.1" y="733.9" transform="rotate(-15 1400.1 733.9)" font-family="Liberation Sans" font-size="13" letter-spacing="0.45" fill="rgba(60,60,72,0.095)">2509111027 admin 222.240.44.51</text><text x="1631.0" y="733.9" transform="rotate(-15 1631.0 733.9)" font-family="Liberation Sans" font-size="13" letter-spacing="0.45" fill="rgba(60,60,72,0.095)">2509111027 admin 222.240.44.51</text><text x="1861.8" y="733.9" transform="rotate(-15 1861.8 733.9)" font-family="Liberation Sans" font-size="13" letter-spacing="0.45" fill="rgba(60,60,72,0.095)">2509111027 admin 222.240.44.51</text><text x="2092.7" y="733.9" transform="rotate(-15 2092.7 733.9)" font-family="Liberation Sans" font-size="13" letter-spacing="0.45" fill="rgba(60,60,72,0.095)">2509111027 admin 222.240.44.51</text><text x="-215.8" y="827.8" transform="rotate(-15 -215.8 827.8)" font-family="Liberation Sans" font-size="13" letter-spacing="0.45" fill="rgba(60,60,72,0.095)">2509111027 admin 222.240.44.51</text><text x="15.0" y="827.8" transform="rotate(-15 15.0 827.8)" font-family="Liberation Sans" font-size="13" letter-spacing="0.45" fill="rgba(60,60,72,0.095)">2509111027 admin 222.240.44.51</text><text x="245.8" y="827.8" transform="rotate(-15 245.8 827.8)" font-family="Liberation Sans" font-size="13" letter-spacing="0.45" fill="rgba(60,60,72,0.095)">2509111027 admin 222.240.44.51</text><text x="476.7" y="827.8" transform="rotate(-15 476.7 827.8)" font-family="Liberation Sans" font-size="13" letter-spacing="0.45" fill="rgba(60,60,72,0.095)">2509111027 admin 222.240.44.51</text><text x="707.5" y="827.8" transform="rotate(-15 707.5 827.8)" font-family="Liberation Sans" font-size="13" letter-spacing="0.45" fill="rgba(60,60,72,0.095)">2509111027 admin 222.240.44.51</text><text x="938.4" y="827.8" transform="rotate(-15 938.4 827.8)" font-family="Liberation Sans" font-size="13" letter-spacing="0.45" fill="rgba(60,60,72,0.095)">2509111027 admin 222.240.44.51</text><text x="1169.2" y="827.8" transform="rotate(-15 1169.2 827.8)" font-family="Liberation Sans" font-size="13" letter-spacing="0.45" fill="rgba(60,60,72,0.095)">2509111027 admin 222.240.44.51</text><text x="1400.1" y="827.8" transform="rotate(-15 1400.1 827.8)" font-family="Liberation Sans" font-size="13" letter-spacing="0.45" fill="rgba(60,60,72,0.095)">2509111027 admin 222.240.44.51</text><text x="1631.0" y="827.8" transform="rotate(-15 1631.0 827.8)" font-family="Liberation Sans" font-size="13" letter-spacing="0.45" fill="rgba(60,60,72,0.095)">2509111027 admin 222.240.44.51</text><text x="1861.8" y="827.8" transform="rotate(-15 1861.8 827.8)" font-family="Liberation Sans" font-size="13" letter-spacing="0.45" fill="rgba(60,60,72,0.095)">2509111027 admin 222.240.44.51</text><text x="2092.7" y="827.8" transform="rotate(-15 2092.7 827.8)" font-family="Liberation Sans" font-size="13" letter-spacing="0.45" fill="rgba(60,60,72,0.095)">2509111027 admin 222.240.44.51</text><text x="-215.8" y="921.7" transform="rotate(-15 -215.8 921.7)" font-family="Liberation Sans" font-size="13" letter-spacing="0.45" fill="rgba(60,60,72,0.095)">2509111027 admin 222.240.44.51</text><text x="15.0" y="921.7" transform="rotate(-15 15.0 921.7)" font-family="Liberation Sans" font-size="13" letter-spacing="0.45" fill="rgba(60,60,72,0.095)">2509111027 admin 222.240.44.51</text><text x="245.8" y="921.7" transform="rotate(-15 245.8 921.7)" font-family="Liberation Sans" font-size="13" letter-spacing="0.45" fill="rgba(60,60,72,0.095)">2509111027 admin 222.240.44.51</text><text x="476.7" y="921.7" transform="rotate(-15 476.7 921.7)" font-family="Liberation Sans" font-size="13" letter-spacing="0.45" fill="rgba(60,60,72,0.095)">2509111027 admin 222.240.44.51</text><text x="707.5" y="921.7" transform="rotate(-15 707.5 921.7)" font-family="Liberation Sans" font-size="13" letter-spacing="0.45" fill="rgba(60,60,72,0.095)">2509111027 admin 222.240.44.51</text><text x="938.4" y="921.7" transform="rotate(-15 938.4 921.7)" font-family="Liberation Sans" font-size="13" letter-spacing="0.45" fill="rgba(60,60,72,0.095)">2509111027 admin 222.240.44.51</text><text x="1169.2" y="921.7" transform="rotate(-15 1169.2 921.7)" font-family="Liberation Sans" font-size="13" letter-spacing="0.45" fill="rgba(60,60,72,0.095)">2509111027 admin 222.240.44.51</text><text x="1400.1" y="921.7" transform="rotate(-15 1400.1 921.7)" font-family="Liberation Sans" font-size="13" letter-spacing="0.45" fill="rgba(60,60,72,0.095)">2509111027 admin 222.240.44.51</text><text x="1631.0" y="921.7" transform="rotate(-15 1631.0 921.7)" font-family="Liberation Sans" font-size="13" letter-spacing="0.45" fill="rgba(60,60,72,0.095)">2509111027 admin 222.240.44.51</text><text x="1861.8" y="921.7" transform="rotate(-15 1861.8 921.7)" font-family="Liberation Sans" font-size="13" letter-spacing="0.45" fill="rgba(60,60,72,0.095)">2509111027 admin 222.240.44.51</text><text x="2092.7" y="921.7" transform="rotate(-15 2092.7 921.7)" font-family="Liberation Sans" font-size="13" letter-spacing="0.45" fill="rgba(60,60,72,0.095)">2509111027 admin 222.240.44.51</text><text x="-215.8" y="1015.6" transform="rotate(-15 -215.8 1015.6)" font-family="Liberation Sans" font-size="13" letter-spacing="0.45" fill="rgba(60,60,72,0.095)">2509111027 admin 222.240.44.51</text><text x="15.0" y="1015.6" transform="rotate(-15 15.0 1015.6)" font-family="Liberation Sans" font-size="13" letter-spacing="0.45" fill="rgba(60,60,72,0.095)">2509111027 admin 222.240.44.51</text><text x="245.8" y="1015.6" transform="rotate(-15 245.8 1015.6)" font-family="Liberation Sans" font-size="13" letter-spacing="0.45" fill="rgba(60,60,72,0.095)">2509111027 admin 222.240.44.51</text><text x="476.7" y="1015.6" transform="rotate(-15 476.7 1015.6)" font-family="Liberation Sans" font-size="13" letter-spacing="0.45" fill="rgba(60,60,72,0.095)">2509111027 admin 222.240.44.51</text><text x="707.5" y="1015.6" transform="rotate(-15 707.5 1015.6)" font-family="Liberation Sans" font-size="13" letter-spacing="0.45" fill="rgba(60,60,72,0.095)">2509111027 admin 222.240.44.51</text><text x="938.4" y="1015.6" transform="rotate(-15 938.4 1015.6)" font-family="Liberation Sans" font-size="13" letter-spacing="0.45" fill="rgba(60,60,72,0.095)">2509111027 admin 222.240.44.51</text><text x="1169.2" y="1015.6" transform="rotate(-15 1169.2 1015.6)" font-family="Liberation Sans" font-size="13" letter-spacing="0.45" fill="rgba(60,60,72,0.095)">2509111027 admin 222.240.44.51</text><text x="1400.1" y="1015.6" transform="rotate(-15 1400.1 1015.6)" font-family="Liberation Sans" font-size="13" letter-spacing="0.45" fill="rgba(60,60,72,0.095)">2509111027 admin 222.240.44.51</text><text x="1631.0" y="1015.6" transform="rotate(-15 1631.0 1015.6)" font-family="Liberation Sans" font-size="13" letter-spacing="0.45" fill="rgba(60,60,72,0.095)">2509111027 admin 222.240.44.51</text><text x="1861.8" y="1015.6" transform="rotate(-15 1861.8 1015.6)" font-family="Liberation Sans" font-size="13" letter-spacing="0.45" fill="rgba(60,60,72,0.095)">2509111027 admin 222.240.44.51</text><text x="2092.7" y="1015.6" transform="rotate(-15 2092.7 1015.6)" font-family="Liberation Sans" font-size="13" letter-spacing="0.45" fill="rgba(60,60,72,0.095)">2509111027 admin 222.240.44.51</text></svg>
<div class="a" style="left:-9px;top:928px;width:12px;height:22px;border-radius:6px;background:#e39bd8"></div>
<div class="a" style="left:1911px;top:201px;width:8px;height:600px;background:#c8ccd4;border-radius:4px"></div>
</body></html>
